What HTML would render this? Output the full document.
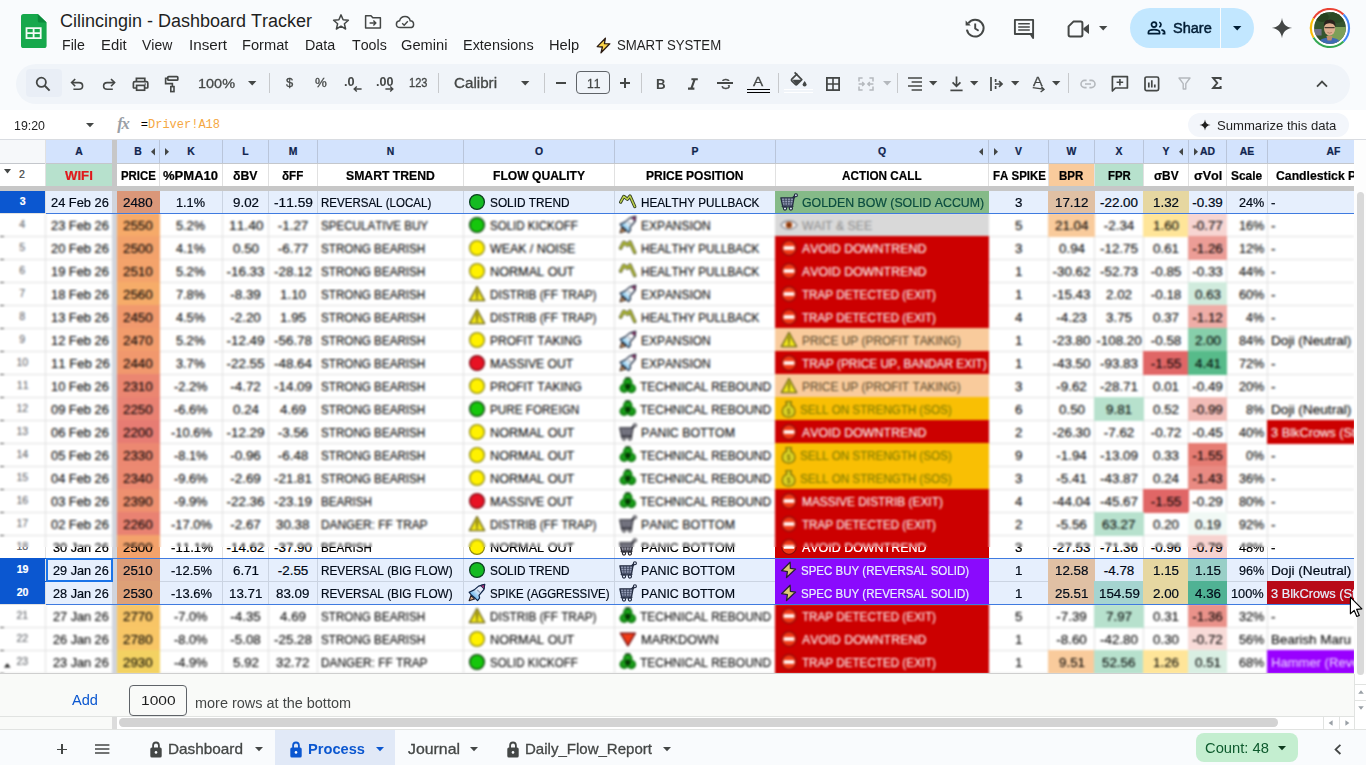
<!DOCTYPE html><html><head><meta charset="utf-8"><title>Cilincingin - Dashboard Tracker</title><style>
html,body{margin:0;padding:0}
body{width:1366px;height:765px;overflow:hidden;background:#f9fbfd;font-family:"Liberation Sans",sans-serif;position:relative}
.t{position:absolute;white-space:nowrap;transform-origin:0 0;line-height:1;font-style:normal;font-kerning:none}
.g .t{-webkit-text-stroke:.22px currentColor}
.g .nb .t{-webkit-text-stroke:.08px currentColor}
.r{position:absolute;display:block;box-sizing:border-box}
.ic{position:absolute;overflow:visible}
.clip{position:absolute;overflow:hidden}
.in{position:absolute;left:0;width:1366px;height:765px}
</style></head><body><svg width="0" height="0" style="position:absolute"><defs><linearGradient id="rk" x1="0" y1="1" x2="1" y2="0"><stop offset="0" stop-color="#2a86c8"/><stop offset=".36" stop-color="#9fd4f2"/><stop offset=".6" stop-color="#ffffff"/><stop offset="1" stop-color="#fdf3f6"/></linearGradient><radialGradient id="rc" cx=".5" cy=".45" r=".6"><stop offset="0" stop-color="#1fae1f"/><stop offset=".65" stop-color="#128712"/><stop offset="1" stop-color="#0a680a"/></radialGradient></defs></svg><svg class="ic" style="left:21.4px;top:14px;" width="26" height="34" viewBox="0 0 26 34"><path d="M2.6 0 H16.8 L25.6 8.6 V31.4 Q25.6 34 23 34 H2.6 Q0 34 0 31.4 V2.6 Q0 0 2.6 0 Z" fill="#17a84c"/><path d="M16.8 0 L25.6 8.6 H19 Q16.8 8.6 16.8 6.4 Z" fill="#0b8a3b"/><path d="M4.6 13.2 H20.6 V25 H4.6 Z M6.4 15 V18.2 H11.7 V15 Z M13.5 15 V18.2 H18.8 V15 Z M6.4 20 V23.2 H11.7 V20 Z M13.5 20 V23.2 H18.8 V20 Z" fill="#f4fbf6" fill-rule="evenodd"/></svg><i class="t" style="left:59.90px;top:12px;font-size:18px;color:#1f1f1f;">Cilincingin - Dashboard Tracker</i><svg class="ic" style="left:332px;top:13px;" width="18" height="18" viewBox="0 0 18 18"><path d="M9 1.9 L11.1 6.8 L16.4 7.3 L12.4 10.8 L13.6 16 L9 13.2 L4.4 16 L5.6 10.8 L1.6 7.3 L6.9 6.8 Z" fill="none" stroke="#444746" stroke-width="1.5" stroke-linejoin="round"/></svg><svg class="ic" style="left:364px;top:14px;" width="18" height="16" viewBox="0 0 18 16"><path d="M1.6 1.8 H7 L8.8 3.8 H16.4 V14 H1.6 Z" fill="none" stroke="#444746" stroke-width="1.5" stroke-linejoin="round"/><path d="M5.6 9 H11.6 M9.4 6.6 L11.8 9 L9.4 11.4" fill="none" stroke="#444746" stroke-width="1.4"/></svg><svg class="ic" style="left:395px;top:14px;" width="20" height="16" viewBox="0 0 20 16"><path d="M5.2 13.6 Q1.4 13.6 1.4 10.2 Q1.4 7.2 4.6 6.8 Q5.6 2.6 10 2.6 Q14.4 2.6 15.2 6.8 Q18.6 7 18.6 10.4 Q18.6 13.6 15 13.6 Z" fill="none" stroke="#444746" stroke-width="1.5" stroke-linejoin="round"/><path d="M7.2 9.2 L9.2 11.2 L12.8 7.2" fill="none" stroke="#444746" stroke-width="1.4"/></svg><i class="t" style="left:61.90px;top:38px;font-size:14px;color:#1f1f1f;transform:scaleX(1.0107);">File</i><i class="t" style="left:100.90px;top:38px;font-size:14px;color:#1f1f1f;transform:scaleX(1.0611);">Edit</i><i class="t" style="left:142.40px;top:38px;font-size:14px;color:#1f1f1f;transform:scaleX(0.9969);">View</i><i class="t" style="left:188.50px;top:38px;font-size:14px;color:#1f1f1f;transform:scaleX(1.0881);">Insert</i><i class="t" style="left:242.20px;top:38px;font-size:14px;color:#1f1f1f;transform:scaleX(1.0465);">Format</i><i class="t" style="left:304.80px;top:38px;font-size:14px;color:#1f1f1f;transform:scaleX(1.0246);">Data</i><i class="t" style="left:351.60px;top:38px;font-size:14px;color:#1f1f1f;transform:scaleX(1.0158);">Tools</i><i class="t" style="left:401.10px;top:38px;font-size:14px;color:#1f1f1f;transform:scaleX(1.0486);">Gemini</i><i class="t" style="left:462.80px;top:38px;font-size:14px;color:#1f1f1f;transform:scaleX(1.0309);">Extensions</i><i class="t" style="left:549.10px;top:38px;font-size:14px;color:#1f1f1f;transform:scaleX(1.0488);">Help</i><i class="t" style="left:616.70px;top:38px;font-size:14px;color:#1f1f1f;transform:scaleX(0.9431);">SMART SYSTEM</i><svg class="ic" style="left:595px;top:37px;" width="17" height="17" viewBox="0 0 17 17"><path d="M10.4 1.2 L2.2 9.6 L7.4 10 L6 15.8 L14.8 6.8 L9.4 6.6 Z" fill="#fbd44a" stroke="#2a1a12" stroke-width="1.3" stroke-linejoin="round"/></svg><svg class="ic" style="left:964px;top:17px;" width="22" height="22" viewBox="0 0 22 22"><path d="M4.4 6.2 A8.4 8.4 0 1 1 2.9 12.6" fill="none" stroke="#444746" stroke-width="2"/><path d="M1.6 3.4 V8.6 H6.8 Z" fill="#444746"/><path d="M11.2 6.6 V11.6 L14.6 13.8" fill="none" stroke="#444746" stroke-width="1.9"/></svg><svg class="ic" style="left:1013px;top:18px;" width="22" height="22" viewBox="0 0 22 22"><path d="M1.9 1.9 H20.1 V16 H17.6 L20.1 20 V16 H1.9 Z" fill="none" stroke="#444746" stroke-width="1.9" stroke-linejoin="round"/><path d="M17 15.6 L20.3 20.6 V15.6 Z" fill="#444746"/><path d="M5.2 5.8 H16.8 M5.2 8.9 H16.8 M5.2 12 H16.8" stroke="#444746" stroke-width="1.5"/></svg><svg class="ic" style="left:1067px;top:20px;" width="24" height="18" viewBox="0 0 24 18"><path d="M6.4 1.6 H13.8 Q15.4 1.6 15.4 3.2 V14.8 Q15.4 16.4 13.8 16.4 H3.2 Q1.6 16.4 1.6 14.8 V6.4 Z" fill="none" stroke="#444746" stroke-width="2" stroke-linejoin="round"/><path d="M16.4 8.2 L22 4 V14 L16.4 9.8 Z" fill="#444746"/></svg><svg class="ic" style="left:1098.8px;top:26.2px;" width="8.4" height="4.4" viewBox="0 0 8.4 4.4"><path d="M0 0 H8.4 L4.2 4.4 Z" fill="#444746"/></svg><b class="r" style="left:1130px;top:8px;width:124px;height:40px;border-radius:20px;background:#c2e7ff"></b><b class="r" style="left:1220px;top:8px;width:1px;height:40px;background:#f9fbfd"></b><svg class="ic" style="left:1147px;top:20px;" width="19" height="16" viewBox="0 0 19 16"><circle cx="7" cy="4.6" r="2.5" fill="none" stroke="#001d35" stroke-width="1.7"/><path d="M1.4 13.6 V12.4 Q1.4 9.6 7 9.6 Q12.6 9.6 12.6 12.4 V13.6 Z" fill="none" stroke="#001d35" stroke-width="1.7" stroke-linejoin="round"/><path d="M12.2 2.2 A2.5 2.5 0 0 1 12.2 7 M14.4 9.9 Q17.6 10.6 17.6 12.6 V13.6 H15.4" fill="none" stroke="#001d35" stroke-width="1.7"/></svg><i class="t" style="left:1172.80px;top:21px;font-size:14px;color:#001d35;transform:scaleX(1.0385);-webkit-text-stroke:.45px #001d35;">Share</i><svg class="ic" style="left:1232.6px;top:26.2px;" width="8.4" height="4.4" viewBox="0 0 8.4 4.4"><path d="M0 0 H8.4 L4.2 4.4 Z" fill="#001d35"/></svg><svg class="ic" style="left:1271px;top:17px;" width="22" height="22" viewBox="0 0 22 22"><path d="M11 0.8 C11.6 6.8 15.2 10.4 21.2 11 C15.2 11.6 11.6 15.2 11 21.2 C10.4 15.2 6.8 11.6 0.8 11 C6.8 10.4 10.4 6.8 11 0.8 Z" fill="#444746"/></svg><svg class="ic" style="left:1310px;top:7.8px;" width="40" height="40" viewBox="0 0 40 40"><defs><clipPath id="av"><circle cx="20" cy="20" r="15.9"/></clipPath></defs><path d="M20 20 L2.59 9.95 A20.1 20.1 0 0 1 34.21 5.79 Z" fill="#ea4335"/><path d="M20 20 L34.21 5.79 A20.1 20.1 0 0 1 34.21 34.21 Z" fill="#4285f4"/><path d="M20 20 L34.21 34.21 A20.1 20.1 0 0 1 2.59 30.05 Z" fill="#34a853"/><path d="M20 20 L2.59 30.05 A20.1 20.1 0 0 1 2.59 9.95 Z" fill="#fbbc04"/><circle cx="20" cy="20" r="18" fill="#fff"/><g clip-path="url(#av)"><rect x="0" y="0" width="40" height="40" fill="#35552f"/><path d="M20 19 H40 V40 H14 Z" fill="#7d9f58"/><path d="M4 21 H11.6 V27.6 H4 Z" fill="#7f789c" opacity=".8"/><ellipse cx="12" cy="9" rx="7" ry="5" fill="#27421f"/><ellipse cx="27" cy="9" rx="8" ry="6" fill="#2b4a25"/><path d="M6 40 Q8 29.6 19.4 29.6 Q31 29.6 33 40 Z" fill="#3f6bb3"/><path d="M16.4 28 H22.6 L21.4 32.4 H17.6 Z" fill="#c18e6d"/><ellipse cx="19.6" cy="20.6" rx="5.6" ry="7" fill="#dcae8f"/><path d="M13.6 18.4 Q13.6 11.4 19.8 11.6 Q25.8 11.6 25.6 18.2 Q23 15 19.6 15.2 Q16 15.2 13.6 18.4 Z" fill="#2a231d"/><path d="M14.6 19.6 H24.6" stroke="#4a3a30" stroke-width="1.1"/><path d="M17.4 24.4 Q19.6 26 21.8 24.4" stroke="#a8705a" stroke-width=".8" fill="none"/></g></svg><b class="r" style="left:16px;top:64px;width:1334px;height:40px;border-radius:20px;background:#f0f4f9"></b><b class="r" style="left:26px;top:69px;width:36px;height:28px;border-radius:4px;background:#e9eef6"></b><svg class="ic" style="left:35px;top:76px;" width="16" height="16" viewBox="0 0 16 16"><circle cx="6.3" cy="6.3" r="4.6" fill="none" stroke="#444746" stroke-width="1.8"/><path d="M9.8 9.8 L14.6 14.6" stroke="#444746" stroke-width="2"/></svg><svg class="ic" style="left:70px;top:76px;" width="15" height="16" viewBox="0 0 15 16"><path d="M2 6.6 H9 Q12.6 6.6 12.6 10 Q12.6 13.3 9 13.3 H3.4" fill="none" stroke="#444746" stroke-width="1.6"/><path d="M5.2 3 L1.6 6.6 L5.2 10.2" fill="none" stroke="#444746" stroke-width="1.6"/></svg><svg class="ic" style="left:102px;top:76px;" width="15" height="16" viewBox="0 0 15 16"><path d="M12.2 6.6 H5.2 Q1.6 6.6 1.6 10 Q1.6 13.3 5.2 13.3 H10.8" fill="none" stroke="#444746" stroke-width="1.6"/><path d="M9 3 L12.6 6.6 L9 10.2" fill="none" stroke="#444746" stroke-width="1.6"/></svg><svg class="ic" style="left:132.4px;top:75.6px;" width="18" height="17" viewBox="0 0 18 17"><path d="M4.4 5.6 V2.4 H12.8 V5.6" fill="none" stroke="#444746" stroke-width="1.7"/><path d="M4.2 12 H2.2 Q1.4 12 1.4 11.2 V7 Q1.4 5.6 2.8 5.6 H14.4 Q15.8 5.6 15.8 7 V11.2 Q15.8 12 15 12 H13" fill="none" stroke="#444746" stroke-width="1.7"/><rect x="4.6" y="9.4" width="8" height="4.8" fill="none" stroke="#444746" stroke-width="1.7"/><circle cx="13.2" cy="8" r=".8" fill="#444746"/></svg><svg class="ic" style="left:164.2px;top:75.4px;" width="16" height="18" viewBox="0 0 16 18"><rect x="3.8" y="1.6" width="10" height="3.6" rx=".8" fill="none" stroke="#444746" stroke-width="1.7"/><path d="M3.8 3.4 H1.6 V8.6 H8.4 V11.6" fill="none" stroke="#444746" stroke-width="1.6"/><rect x="6.8" y="11.6" width="3.2" height="5" fill="none" stroke="#444746" stroke-width="1.6"/></svg><i class="t" style="left:198.00px;top:77px;font-size:13.6px;color:#444746;transform:scaleX(1.0637);-webkit-text-stroke:.3px currentColor;">100%</i><svg class="ic" style="left:247.70000000000002px;top:81.39999999999999px;" width="8.4" height="4.4" viewBox="0 0 8.4 4.4"><path d="M0 0 H8.4 L4.2 4.4 Z" fill="#444746"/></svg><b class="r" style="left:269px;top:73px;width:1px;height:20px;background:#c7c9cc"></b><i class="t" style="left:285.60px;top:76px;font-size:13px;color:#444746;transform:scaleX(0.9958);-webkit-text-stroke:.3px currentColor;">$</i><i class="t" style="left:315.00px;top:76px;font-size:13px;color:#444746;transform:scaleX(1.0209);-webkit-text-stroke:.3px currentColor;">%</i><i class="t" style="left:344.40px;top:76px;font-size:12px;color:#444746;font-weight:700;transform:scaleX(1.0592);">.0</i><svg class="ic" style="left:353px;top:86px;" width="9" height="6" viewBox="0 0 9 6"><path d="M8.6 3 H1.6 M3.8 .6 L1.2 3 L3.8 5.4" fill="none" stroke="#444746" stroke-width="1.4"/></svg><i class="t" style="left:376.20px;top:76px;font-size:12px;color:#444746;font-weight:700;transform:scaleX(1.0430);">.00</i><svg class="ic" style="left:385px;top:86px;" width="9" height="6" viewBox="0 0 9 6"><path d="M.4 3 H7.4 M5.2 .6 L7.8 3 L5.2 5.4" fill="none" stroke="#444746" stroke-width="1.4"/></svg><i class="t" style="left:409.00px;top:77px;font-size:12px;color:#444746;transform:scaleX(0.9190);-webkit-text-stroke:.3px currentColor;">123</i><b class="r" style="left:438px;top:73px;width:1px;height:20px;background:#c7c9cc"></b><i class="t" style="left:454.00px;top:76px;font-size:14px;color:#444746;transform:scaleX(1.0837);-webkit-text-stroke:.3px currentColor;">Calibri</i><svg class="ic" style="left:520.5999999999999px;top:81.39999999999999px;" width="8.4" height="4.4" viewBox="0 0 8.4 4.4"><path d="M0 0 H8.4 L4.2 4.4 Z" fill="#444746"/></svg><b class="r" style="left:544px;top:73px;width:1px;height:20px;background:#c7c9cc"></b><b class="r" style="left:556px;top:82px;width:10px;height:1.6px;background:#444746"></b><b class="r" style="left:576px;top:71px;width:34px;height:23.4px;border:1px solid #5f6368;border-radius:4px"></b><i class="t" style="left:587.20px;top:77px;font-size:13.6px;color:#444746;transform:scaleX(0.8924);-webkit-text-stroke:.3px currentColor;">11</i><b class="r" style="left:620px;top:82px;width:10.4px;height:1.6px;background:#444746"></b><b class="r" style="left:624.4px;top:77.6px;width:1.6px;height:10.4px;background:#444746"></b><b class="r" style="left:641px;top:73px;width:1px;height:20px;background:#c7c9cc"></b><i class="t" style="left:656.20px;top:76px;font-size:15px;color:#444746;font-weight:700;transform:scaleX(0.8862);">B</i><svg class="ic" style="left:687px;top:77px;" width="12" height="13" viewBox="0 0 12 13"><path d="M4.4 2.2 H10.8 M1 11.6 H7.4 M7.7 2.2 L4.3 11.6" fill="none" stroke="#444746" stroke-width="2.1"/></svg><i class="t" style="left:720.90px;top:77px;font-size:14.6px;color:#444746;transform:scaleX(0.9652);-webkit-text-stroke:.3px currentColor;">S</i><b class="r" style="left:716px;top:81.2px;width:18px;height:3.8px;background:#f0f4f9"></b><b class="r" style="left:717px;top:82.4px;width:16px;height:1.5px;background:#444746"></b><i class="t" style="left:753.10px;top:75px;font-size:13.4px;color:#444746;transform:scaleX(1.1412);-webkit-text-stroke:.3px currentColor;">A</i><b class="r" style="left:747px;top:88.8px;width:23.2px;height:1.6px;background:#000"></b><b class="r" style="left:747px;top:91.7px;width:23.2px;height:1.6px;background:#000"></b><b class="r" style="left:778px;top:73px;width:1px;height:20px;background:#c7c9cc"></b><svg class="ic" style="left:789px;top:71px;" width="20" height="18" viewBox="0 0 20 18"><path d="M5.6 1.4 L12.8 8.6 L8 13.4 Q7.2 14.2 6.4 13.4 L2.8 9.8 Q2 9 2.8 8.2 L8.4 2.6" fill="none" stroke="#444746" stroke-width="1.7" stroke-linejoin="round"/><path d="M3.4 8.8 H12.4 L7.2 13.8 Z" fill="#444746"/><path d="M15.6 10 Q17.6 12.6 17.6 13.6 A2 2 0 0 1 13.6 13.6 Q13.6 12.6 15.6 10 Z" fill="#444746"/></svg><b class="r" style="left:784.4px;top:88.8px;width:28.2px;height:1.6px;background:#fff"></b><b class="r" style="left:784.4px;top:91.7px;width:28.2px;height:1.6px;background:#fff"></b><svg class="ic" style="left:826px;top:77px;" width="14" height="14" viewBox="0 0 14 14"><rect x=".9" y=".9" width="12.2" height="12.2" fill="none" stroke="#444746" stroke-width="1.8"/><path d="M7 1 V13 M1 7 H13" stroke="#444746" stroke-width="1.6"/></svg><svg class="ic" style="left:858px;top:77px;" width="16" height="14" viewBox="0 0 16 14"><path d="M4.6 1 H1 V4.4 M11.4 1 H15 V4.4 M4.6 13 H1 V9.6 M11.4 13 H15 V9.6" fill="none" stroke="#b4b8bd" stroke-width="1.5"/><path d="M.6 7 H6 M4.2 5 L6.2 7 L4.2 9 M15.4 7 H10 M11.8 5 L9.8 7 L11.8 9" fill="none" stroke="#b4b8bd" stroke-width="1.4"/></svg><svg class="ic" style="left:882.6999999999999px;top:81.39999999999999px;" width="8.4" height="4.4" viewBox="0 0 8.4 4.4"><path d="M0 0 H8.4 L4.2 4.4 Z" fill="#b4b8bd"/></svg><b class="r" style="left:897px;top:73px;width:1px;height:20px;background:#c7c9cc"></b><svg class="ic" style="left:908px;top:77px;" width="14" height="14" viewBox="0 0 14 14"><path d="M0 1 H14 M3.6 5 H14 M0 9 H14 M3.6 13 H14" stroke="#444746" stroke-width="1.7"/></svg><svg class="ic" style="left:928.8px;top:81.39999999999999px;" width="8.4" height="4.4" viewBox="0 0 8.4 4.4"><path d="M0 0 H8.4 L4.2 4.4 Z" fill="#444746"/></svg><svg class="ic" style="left:950px;top:76px;" width="13" height="16" viewBox="0 0 13 16"><path d="M6.5 .6 V10 M2.6 6.4 L6.5 10.4 L10.4 6.4" fill="none" stroke="#444746" stroke-width="1.7"/><path d="M.4 14.4 H12.6" stroke="#444746" stroke-width="1.7"/></svg><svg class="ic" style="left:969.8px;top:81.39999999999999px;" width="8.4" height="4.4" viewBox="0 0 8.4 4.4"><path d="M0 0 H8.4 L4.2 4.4 Z" fill="#444746"/></svg><svg class="ic" style="left:990px;top:77px;" width="14" height="14" viewBox="0 0 14 14"><path d="M1 0 V14 M5.6 2 V5 M5.6 9 V12" stroke="#444746" stroke-width="1.7"/><path d="M5 7 H11.4 M9 4.2 L12 7 L9 9.8" fill="none" stroke="#444746" stroke-width="1.7"/></svg><svg class="ic" style="left:1010.8px;top:81.39999999999999px;" width="8.4" height="4.4" viewBox="0 0 8.4 4.4"><path d="M0 0 H8.4 L4.2 4.4 Z" fill="#444746"/></svg><i class="t" style="left:1033.00px;top:76px;font-size:12.6px;color:#444746;transform:scaleX(1.1422);-webkit-text-stroke:.3px currentColor;">A</i><svg class="ic" style="left:1032px;top:86px;" width="14" height="7" viewBox="0 0 14 7"><path d="M.6 2.4 H11.4 M9 .2 L12 2.6 L9 5.6" fill="none" stroke="#444746" stroke-width="1.4" transform="rotate(8 6 3)"/></svg><svg class="ic" style="left:1051.8px;top:81.39999999999999px;" width="8.4" height="4.4" viewBox="0 0 8.4 4.4"><path d="M0 0 H8.4 L4.2 4.4 Z" fill="#444746"/></svg><b class="r" style="left:1068px;top:73px;width:1px;height:20px;background:#c7c9cc"></b><svg class="ic" style="left:1080px;top:79px;" width="16" height="10" viewBox="0 0 16 10"><path d="M6.6 1.4 H4.6 A3.6 3.6 0 0 0 4.6 8.6 H6.6 M9.4 1.4 H11.4 A3.6 3.6 0 0 1 11.4 8.6 H9.4 M5 5 H11" fill="none" stroke="#b4b8bd" stroke-width="1.6"/></svg><svg class="ic" style="left:1111px;top:75px;" width="18" height="18" viewBox="0 0 18 18"><path d="M1.4 1.6 H16.4 V13 H4.4 L1.4 16 Z" fill="none" stroke="#444746" stroke-width="1.7" stroke-linejoin="round"/><path d="M8.9 4 V10.6 M5.6 7.3 H12.2" stroke="#444746" stroke-width="1.6"/></svg><svg class="ic" style="left:1144px;top:76px;" width="16" height="16" viewBox="0 0 16 16"><rect x="1" y="1" width="13.6" height="13.6" rx="1.6" fill="none" stroke="#444746" stroke-width="1.7"/><path d="M4.8 6.6 V11.6 M7.8 4.2 V11.6 M10.8 8.6 V11.6" stroke="#444746" stroke-width="1.7"/></svg><svg class="ic" style="left:1178px;top:77px;" width="13" height="14" viewBox="0 0 13 14"><path d="M1 1 H12 L7.8 6.6 V12 H5.2 V6.6 Z" fill="none" stroke="#b4b8bd" stroke-width="1.4" stroke-linejoin="round"/></svg><svg class="ic" style="left:1212px;top:77.4px;" width="10" height="12" viewBox="0 0 10 12"><path d="M8.6 2.9 V1 H1.2 L5.2 6 L1.2 11 H8.6 V9.1" fill="none" stroke="#444746" stroke-width="2" stroke-linejoin="miter"/></svg><svg class="ic" style="left:1316px;top:80px;" width="12" height="8" viewBox="0 0 12 8"><path d="M1 6.6 L6 1.6 L11 6.6" fill="none" stroke="#444746" stroke-width="1.8"/></svg><b class="r" style="left:0;top:110px;width:1366px;height:30px;background:#fff"></b><b class="r" style="left:0;top:139px;width:1366px;height:1px;background:#d9dce1"></b><i class="t" style="left:14.00px;top:119px;font-size:13px;color:#1f1f1f;transform:scaleX(0.9529);">19:20</i><svg class="ic" style="left:85.6px;top:122.9px;" width="8" height="4.2" viewBox="0 0 8 4.2"><path d="M0 0 H8 L4.0 4.2 Z" fill="#444746"/></svg><i class="t" style="left:117.2px;top:116.4px;font-family:'Liberation Serif',serif;font-style:italic;font-weight:700;font-size:16.6px;color:#9aa0a6;letter-spacing:-1.2px">fx</i><i class="t" style="left:140.8px;top:119.4px;font-family:'Liberation Mono',monospace;font-size:12px;color:#000">=<span style="color:#f5a742">Driver!A18</span></i><b class="r" style="left:1188px;top:113px;width:161px;height:24px;border-radius:12px;background:#f3f6fb"></b><svg class="ic" style="left:1199px;top:119px;" width="12" height="12" viewBox="0 0 12 12"><path d="M6 .4 C6.4 3.8 8.2 5.6 11.6 6 C8.2 6.4 6.4 8.2 6 11.6 C5.6 8.2 3.8 6.4 .4 6 C3.8 5.6 5.6 3.8 6 .4 Z" fill="#1f1f1f"/></svg><i class="t" style="left:1217.40px;top:119px;font-size:13px;color:#1f1f1f;transform:scaleX(1.0076);">Summarize this data</i><div class="clip g" style="left:0;top:0;width:1354px;height:765px"><b class="r" style="left:0px;top:140px;width:1354px;height:534px;background:#fff"></b><b class="r" style="left:0px;top:140px;width:45px;height:23px;background:#f6f8fa"></b><b class="r" style="left:46px;top:140px;width:1308px;height:23px;background:#d3e3fd"></b><b class="r" style="left:0px;top:163px;width:1354px;height:1px;background:#c4c7cc"></b><i class="t" style="left:75.24px;top:147px;font-size:10.4px;color:#10254f;font-weight:700;">A</i><i class="t" style="left:134.24px;top:147px;font-size:10.4px;color:#10254f;font-weight:700;">B</i><b class="r" style="left:159px;top:140px;width:1px;height:23px;background:#b9c5da"></b><i class="t" style="left:187.24px;top:147px;font-size:10.4px;color:#10254f;font-weight:700;">K</i><b class="r" style="left:222px;top:140px;width:1px;height:23px;background:#b9c5da"></b><i class="t" style="left:242.32px;top:147px;font-size:10.4px;color:#10254f;font-weight:700;">L</i><b class="r" style="left:268px;top:140px;width:1px;height:23px;background:#b9c5da"></b><i class="t" style="left:288.67px;top:147px;font-size:10.4px;color:#10254f;font-weight:700;">M</i><b class="r" style="left:317px;top:140px;width:1px;height:23px;background:#b9c5da"></b><i class="t" style="left:386.74px;top:147px;font-size:10.4px;color:#10254f;font-weight:700;">N</i><b class="r" style="left:463px;top:140px;width:1px;height:23px;background:#b9c5da"></b><i class="t" style="left:534.96px;top:147px;font-size:10.4px;color:#10254f;font-weight:700;">O</i><b class="r" style="left:614px;top:140px;width:1px;height:23px;background:#b9c5da"></b><i class="t" style="left:691.53px;top:147px;font-size:10.4px;color:#10254f;font-weight:700;">P</i><b class="r" style="left:775px;top:140px;width:1px;height:23px;background:#b9c5da"></b><i class="t" style="left:877.96px;top:147px;font-size:10.4px;color:#10254f;font-weight:700;">Q</i><b class="r" style="left:988px;top:140px;width:1px;height:23px;background:#b9c5da"></b><i class="t" style="left:1015.03px;top:147px;font-size:10.4px;color:#10254f;font-weight:700;">V</i><b class="r" style="left:1048px;top:140px;width:1px;height:23px;background:#b9c5da"></b><i class="t" style="left:1066.59px;top:147px;font-size:10.4px;color:#10254f;font-weight:700;">W</i><b class="r" style="left:1094px;top:140px;width:1px;height:23px;background:#b9c5da"></b><i class="t" style="left:1115.53px;top:147px;font-size:10.4px;color:#10254f;font-weight:700;">X</i><b class="r" style="left:1143px;top:140px;width:1px;height:23px;background:#b9c5da"></b><i class="t" style="left:1162.53px;top:147px;font-size:10.4px;color:#10254f;font-weight:700;">Y</i><b class="r" style="left:1188px;top:140px;width:1px;height:23px;background:#b9c5da"></b><i class="t" style="left:1199.99px;top:147px;font-size:10.4px;color:#10254f;font-weight:700;">AD</i><b class="r" style="left:1226px;top:140px;width:1px;height:23px;background:#b9c5da"></b><i class="t" style="left:1239.78px;top:147px;font-size:10.4px;color:#10254f;font-weight:700;">AE</i><b class="r" style="left:1267px;top:140px;width:1px;height:23px;background:#b9c5da"></b><i class="t" style="left:1326.57px;top:147px;font-size:10.4px;color:#10254f;font-weight:700;">AF</i><svg class="ic" style="left:150.5px;top:148.3px" width="4" height="8" viewBox="0 0 4 8"><path d="M4 0 V7.6 L0 3.8 Z" fill="#444746"/></svg><svg class="ic" style="left:165px;top:148.3px" width="4" height="8" viewBox="0 0 4 8"><path d="M0 0 V7.6 L4 3.8 Z" fill="#444746"/></svg><svg class="ic" style="left:979.2px;top:148.3px" width="4" height="8" viewBox="0 0 4 8"><path d="M4 0 V7.6 L0 3.8 Z" fill="#444746"/></svg><svg class="ic" style="left:994px;top:148.3px" width="4" height="8" viewBox="0 0 4 8"><path d="M0 0 V7.6 L4 3.8 Z" fill="#444746"/></svg><svg class="ic" style="left:1179.4px;top:148.3px" width="4" height="8" viewBox="0 0 4 8"><path d="M4 0 V7.6 L0 3.8 Z" fill="#444746"/></svg><svg class="ic" style="left:1194px;top:148.3px" width="4" height="8" viewBox="0 0 4 8"><path d="M0 0 V7.6 L4 3.8 Z" fill="#444746"/></svg><b class="r" style="left:46px;top:164px;width:66px;height:22px;background:#b7e1cd"></b><b class="r" style="left:1049px;top:164px;width:45px;height:22px;background:#f9cb9c"></b><b class="r" style="left:1095px;top:164px;width:48px;height:22px;background:#b7e1cd"></b><b class="r" style="left:159px;top:164px;width:1px;height:22px;background:#e1e1e1"></b><b class="r" style="left:222px;top:164px;width:1px;height:22px;background:#e1e1e1"></b><b class="r" style="left:268px;top:164px;width:1px;height:22px;background:#e1e1e1"></b><b class="r" style="left:317px;top:164px;width:1px;height:22px;background:#e1e1e1"></b><b class="r" style="left:463px;top:164px;width:1px;height:22px;background:#e1e1e1"></b><b class="r" style="left:614px;top:164px;width:1px;height:22px;background:#e1e1e1"></b><b class="r" style="left:775px;top:164px;width:1px;height:22px;background:#e1e1e1"></b><b class="r" style="left:988px;top:164px;width:1px;height:22px;background:#e1e1e1"></b><b class="r" style="left:1048px;top:164px;width:1px;height:22px;background:#e1e1e1"></b><b class="r" style="left:1094px;top:164px;width:1px;height:22px;background:#e1e1e1"></b><b class="r" style="left:1143px;top:164px;width:1px;height:22px;background:#e1e1e1"></b><b class="r" style="left:1188px;top:164px;width:1px;height:22px;background:#e1e1e1"></b><b class="r" style="left:1226px;top:164px;width:1px;height:22px;background:#e1e1e1"></b><b class="r" style="left:1267px;top:164px;width:1px;height:22px;background:#e1e1e1"></b><i class="t" style="left:65.08px;top:169px;font-size:13.4px;color:#e0191c;font-weight:700;transform:scaleX(0.9847);">WIFI</i><i class="t" style="left:120.55px;top:169px;font-size:13.4px;color:#000;font-weight:700;transform:scaleX(0.8520);">PRICE</i><i class="t" style="left:163.46px;top:169px;font-size:13.4px;color:#000;font-weight:700;transform:scaleX(0.9731);">%PMA10</i><i class="t" style="left:233.27px;top:169px;font-size:13.4px;color:#000;font-weight:700;transform:scaleX(0.9145);">δBV</i><i class="t" style="left:282.36px;top:169px;font-size:13.4px;color:#000;font-weight:700;transform:scaleX(0.8685);">δFF</i><i class="t" style="left:346.04px;top:169px;font-size:13.4px;color:#000;font-weight:700;transform:scaleX(0.9117);">SMART TREND</i><i class="t" style="left:492.93px;top:169px;font-size:13.4px;color:#000;font-weight:700;transform:scaleX(0.9037);">FLOW QUALITY</i><i class="t" style="left:646.24px;top:169px;font-size:13.4px;color:#000;font-weight:700;transform:scaleX(0.8972);">PRICE POSITION</i><i class="t" style="left:842.16px;top:169px;font-size:13.4px;color:#000;font-weight:700;transform:scaleX(0.8774);">ACTION CALL</i><i class="t" style="left:992.54px;top:169px;font-size:13.4px;color:#000;font-weight:700;transform:scaleX(0.8574);">FA SPIKE</i><i class="t" style="left:1059.36px;top:169px;font-size:13.4px;color:#000;font-weight:700;transform:scaleX(0.8583);">BPR</i><i class="t" style="left:1107.60px;top:169px;font-size:13.4px;color:#000;font-weight:700;transform:scaleX(0.8505);">FPR</i><i class="t" style="left:1153.69px;top:169px;font-size:13.4px;color:#000;font-weight:700;transform:scaleX(0.8865);">σBV</i><i class="t" style="left:1193.77px;top:169px;font-size:13.4px;color:#000;font-weight:700;transform:scaleX(0.9465);">σVol</i><i class="t" style="left:1231.39px;top:169px;font-size:13.4px;color:#000;font-weight:700;transform:scaleX(0.8912);">Scale</i><i class="t" style="left:1275.60px;top:169px;font-size:13.4px;color:#000;font-weight:700;transform:scaleX(0.9138);">Candlestick P</i><i class="t" style="left:19.05px;top:169px;font-size:10.6px;color:#444746;">2</i><svg class="ic" style="left:4px;top:168.6px" width="7" height="5" viewBox="0 0 7 5"><path d="M0 0 H7 L3.5 4.4 Z" fill="#444746"/></svg><b class="r" style="left:45px;top:140px;width:1px;height:46px;background:#e1e1e1"></b><div class="in" style="top:0"><b class="r" style="left:0px;top:190px;width:46px;height:24px;background:#0b57d0"></b><i class="t" style="left:19.65px;top:196px;font-size:10.6px;color:#fff;font-weight:700;">3</i><b class="r" style="left:0px;top:213px;width:1354px;height:1px;background:#e1e1e1"></b><b class="r" style="left:159px;top:191px;width:1px;height:22px;background:#e1e1e1"></b><b class="r" style="left:222px;top:191px;width:1px;height:22px;background:#e1e1e1"></b><b class="r" style="left:268px;top:191px;width:1px;height:22px;background:#e1e1e1"></b><b class="r" style="left:317px;top:191px;width:1px;height:22px;background:#e1e1e1"></b><b class="r" style="left:463px;top:191px;width:1px;height:22px;background:#e1e1e1"></b><b class="r" style="left:614px;top:191px;width:1px;height:22px;background:#e1e1e1"></b><b class="r" style="left:775px;top:191px;width:1px;height:22px;background:#e1e1e1"></b><b class="r" style="left:988px;top:191px;width:1px;height:22px;background:#e1e1e1"></b><b class="r" style="left:1048px;top:191px;width:1px;height:22px;background:#e1e1e1"></b><b class="r" style="left:1094px;top:191px;width:1px;height:22px;background:#e1e1e1"></b><b class="r" style="left:1143px;top:191px;width:1px;height:22px;background:#e1e1e1"></b><b class="r" style="left:1188px;top:191px;width:1px;height:22px;background:#e1e1e1"></b><b class="r" style="left:1226px;top:191px;width:1px;height:22px;background:#e1e1e1"></b><b class="r" style="left:1267px;top:191px;width:1px;height:22px;background:#e1e1e1"></b><b class="r" style="left:45px;top:191px;width:1px;height:23px;background:#e1e1e1"></b><b class="r" style="left:117px;top:191px;width:43px;height:23px;background:#f29e6c"></b><b class="r" style="left:775px;top:191px;width:214px;height:23px;background:#93c47d"></b><b class="r" style="left:1048px;top:191px;width:47px;height:23px;background:#f9cb9c"></b><b class="r" style="left:1143px;top:191px;width:46px;height:23px;background:#ffe599"></b><i class="t" style="left:51.45px;top:196px;font-size:13.4px;color:#000;transform:scaleX(0.9594);">24 Feb 26</i><i class="t" style="left:123.13px;top:196px;font-size:13.4px;color:#000;transform:scaleX(0.9975);">2480</i><i class="t" style="left:176.47px;top:196px;font-size:13.4px;color:#000;transform:scaleX(0.9513);">1.1%</i><i class="t" style="left:232.50px;top:196px;font-size:13.4px;color:#000;transform:scaleX(0.9971);">9.02</i><i class="t" style="left:274.04px;top:196px;font-size:13.4px;color:#000;transform:scaleX(1.0251);">-11.59</i><i class="t" style="left:321.00px;top:196px;font-size:13.4px;color:#000;transform:scaleX(0.8613);">REVERSAL (LOCAL)</i><svg class="ic" style="left:468.00px;top:193.00px" width="18" height="18" viewBox="0 0 18 18"><circle cx="9" cy="9" r="7.4" fill="#16c60c" stroke="#0c3f0a" stroke-width="1.3"/></svg><i class="t" style="left:490.00px;top:196px;font-size:13.4px;color:#000;transform:scaleX(0.8839);">SOLID TREND</i><svg class="ic" style="left:619.00px;top:193.00px" width="18" height="18" viewBox="0 0 18 18"><path d="M1.6 9.2 L4.8 3.3 L8.4 6.3 L11 3 L15.8 13.6" fill="none" stroke="#33360a" stroke-width="3.2" stroke-linecap="round" stroke-linejoin="round"/><path d="M1.6 9.2 L4.8 3.3 L8.4 6.3 L11 3 L15.8 13.6" fill="none" stroke="#d2de3c" stroke-width="1.5" stroke-linecap="round" stroke-linejoin="round"/></svg><i class="t" style="left:641.00px;top:196px;font-size:13.4px;color:#000;transform:scaleX(0.8744);">HEALTHY PULLBACK</i><svg class="ic" style="left:780.00px;top:193.00px" width="18" height="18" viewBox="0 0 18 18"><path d="M12.8 5.2 L15.4 2.6" stroke="#23232b" stroke-width="2.2" stroke-linecap="round"/><circle cx="15.9" cy="2.2" r="1.5" fill="#f0f0f4" stroke="#23232b" stroke-width="1.1"/><path d="M.9 4.8 H14 L12.6 12.3 H2.5 Z" fill="#a9a9b6" stroke="#23232b" stroke-width="1.3" stroke-linejoin="round"/><path d="M1.6 7.3 H13.4 M2.2 9.8 H12.9 M4.5 5 L5 12 M7.5 5 V12 M10.6 5 L10.1 12" stroke="#3c3c48" stroke-width=".75"/><path d="M2.5 12.3 L2.1 14 H13 L12.6 12.3" fill="#62626e" stroke="#23232b" stroke-width="1" stroke-linejoin="round"/><circle cx="5" cy="15.5" r="1.6" fill="#f4f4f7" stroke="#23232b" stroke-width="1.1"/><circle cx="10.9" cy="15.5" r="1.6" fill="#f4f4f7" stroke="#23232b" stroke-width="1.1"/></svg><i class="t" style="left:802.00px;top:196px;font-size:13.4px;color:#0b4a2c;transform:scaleX(0.9200);">GOLDEN BOW (SOLID ACCUM)</i><i class="t" style="left:1014.78px;top:196px;font-size:13.4px;color:#000;transform:scaleX(0.9975);">3</i><i class="t" style="left:1054.78px;top:196px;font-size:13.4px;color:#000;transform:scaleX(0.9972);">17.12</i><i class="t" style="left:1100.04px;top:196px;font-size:13.4px;color:#000;">-22.00</i><i class="t" style="left:1153.00px;top:196px;font-size:13.4px;color:#000;transform:scaleX(0.9971);">1.32</i><i class="t" style="left:1192.25px;top:196px;font-size:13.4px;color:#000;">-0.39</i><i class="t" style="left:1238.65px;top:196px;font-size:13.4px;color:#000;transform:scaleX(0.9453);">24%</i><i class="t" style="left:1271.00px;top:196px;font-size:13.4px;color:#000;transform:scaleX(1.0062);">-</i><i class="t" style="left:16.40px;top:541px;font-size:10.6px;color:#5f6368;">18</i><b class="r" style="left:0px;top:558px;width:1354px;height:1px;background:#e1e1e1"></b><b class="r" style="left:159px;top:536px;width:1px;height:22px;background:#e1e1e1"></b><b class="r" style="left:222px;top:536px;width:1px;height:22px;background:#e1e1e1"></b><b class="r" style="left:268px;top:536px;width:1px;height:22px;background:#e1e1e1"></b><b class="r" style="left:317px;top:536px;width:1px;height:22px;background:#e1e1e1"></b><b class="r" style="left:463px;top:536px;width:1px;height:22px;background:#e1e1e1"></b><b class="r" style="left:614px;top:536px;width:1px;height:22px;background:#e1e1e1"></b><b class="r" style="left:775px;top:536px;width:1px;height:22px;background:#e1e1e1"></b><b class="r" style="left:988px;top:536px;width:1px;height:22px;background:#e1e1e1"></b><b class="r" style="left:1048px;top:536px;width:1px;height:22px;background:#e1e1e1"></b><b class="r" style="left:1094px;top:536px;width:1px;height:22px;background:#e1e1e1"></b><b class="r" style="left:1143px;top:536px;width:1px;height:22px;background:#e1e1e1"></b><b class="r" style="left:1188px;top:536px;width:1px;height:22px;background:#e1e1e1"></b><b class="r" style="left:1226px;top:536px;width:1px;height:22px;background:#e1e1e1"></b><b class="r" style="left:1267px;top:536px;width:1px;height:22px;background:#e1e1e1"></b><b class="r" style="left:45px;top:536px;width:1px;height:23px;background:#e1e1e1"></b><b class="r" style="left:117px;top:535px;width:43px;height:24px;background:#f3a26b"></b><b class="r" style="left:775px;top:535px;width:214px;height:24px;background:#cc0000"></b><b class="r" style="left:1188px;top:535px;width:39px;height:24px;background:#f7d3d0"></b><i class="t" style="left:52.51px;top:541px;font-size:13.4px;color:#000;transform:scaleX(0.9476);">30 Jan 26</i><i class="t" style="left:123.13px;top:541px;font-size:13.4px;color:#000;transform:scaleX(0.9975);">2500</i><i class="t" style="left:170.51px;top:541px;font-size:13.4px;color:#000;transform:scaleX(0.9883);">-11.1%</i><i class="t" style="left:226.54px;top:541px;font-size:13.4px;color:#000;">-14.62</i><i class="t" style="left:274.04px;top:541px;font-size:13.4px;color:#000;">-37.90</i><i class="t" style="left:321.00px;top:541px;font-size:13.4px;color:#000;transform:scaleX(0.8670);">BEARISH</i><svg class="ic" style="left:468.00px;top:538.00px" width="18" height="18" viewBox="0 0 18 18"><circle cx="9" cy="9" r="7.4" fill="#fff100" stroke="#8f8a12" stroke-width="1.3"/></svg><i class="t" style="left:490.00px;top:541px;font-size:13.4px;color:#000;transform:scaleX(0.9446);">NORMAL OUT</i><svg class="ic" style="left:619.00px;top:538.00px" width="18" height="18" viewBox="0 0 18 18"><path d="M12.8 5.2 L15.4 2.6" stroke="#23232b" stroke-width="2.2" stroke-linecap="round"/><circle cx="15.9" cy="2.2" r="1.5" fill="#f0f0f4" stroke="#23232b" stroke-width="1.1"/><path d="M.9 4.8 H14 L12.6 12.3 H2.5 Z" fill="#a9a9b6" stroke="#23232b" stroke-width="1.3" stroke-linejoin="round"/><path d="M1.6 7.3 H13.4 M2.2 9.8 H12.9 M4.5 5 L5 12 M7.5 5 V12 M10.6 5 L10.1 12" stroke="#3c3c48" stroke-width=".75"/><path d="M2.5 12.3 L2.1 14 H13 L12.6 12.3" fill="#62626e" stroke="#23232b" stroke-width="1" stroke-linejoin="round"/><circle cx="5" cy="15.5" r="1.6" fill="#f4f4f7" stroke="#23232b" stroke-width="1.1"/><circle cx="10.9" cy="15.5" r="1.6" fill="#f4f4f7" stroke="#23232b" stroke-width="1.1"/></svg><i class="t" style="left:641.00px;top:541px;font-size:13.4px;color:#000;transform:scaleX(0.9221);">PANIC BOTTOM</i><svg class="ic" style="left:780.00px;top:538.00px" width="18" height="18" viewBox="0 0 18 18"><circle cx="9" cy="9" r="7.3" fill="#f03a17" stroke="#8b0a0a" stroke-width="1.3"/><rect x="3.6" y="7.3" width="10.8" height="3.4" rx="0.6" fill="#fff"/></svg><i class="t" style="left:802.00px;top:541px;font-size:13.4px;color:#ffffff;transform:scaleX(0.9291);">AVOID DOWNTREND</i><i class="t" style="left:1014.78px;top:541px;font-size:13.4px;color:#000;transform:scaleX(0.9975);">3</i><i class="t" style="left:1052.54px;top:541px;font-size:13.4px;color:#000;">-27.53</i><i class="t" style="left:1100.04px;top:541px;font-size:13.4px;color:#000;">-71.36</i><i class="t" style="left:1150.75px;top:541px;font-size:13.4px;color:#000;">-0.96</i><i class="t" style="left:1192.25px;top:541px;font-size:13.4px;color:#000;">-0.79</i><i class="t" style="left:1238.65px;top:541px;font-size:13.4px;color:#000;transform:scaleX(0.9453);">48%</i><i class="t" style="left:1271.00px;top:541px;font-size:13.4px;color:#000;transform:scaleX(1.0062);">-</i><b class="r" style="left:0px;top:558px;width:46px;height:24px;background:#0b57d0"></b><i class="t" style="left:16.70px;top:564px;font-size:10.6px;color:#fff;font-weight:700;">19</i><b class="r" style="left:0px;top:581px;width:1354px;height:1px;background:#e1e1e1"></b><b class="r" style="left:159px;top:559px;width:1px;height:22px;background:#e1e1e1"></b><b class="r" style="left:222px;top:559px;width:1px;height:22px;background:#e1e1e1"></b><b class="r" style="left:268px;top:559px;width:1px;height:22px;background:#e1e1e1"></b><b class="r" style="left:317px;top:559px;width:1px;height:22px;background:#e1e1e1"></b><b class="r" style="left:463px;top:559px;width:1px;height:22px;background:#e1e1e1"></b><b class="r" style="left:614px;top:559px;width:1px;height:22px;background:#e1e1e1"></b><b class="r" style="left:775px;top:559px;width:1px;height:22px;background:#e1e1e1"></b><b class="r" style="left:988px;top:559px;width:1px;height:22px;background:#e1e1e1"></b><b class="r" style="left:1048px;top:559px;width:1px;height:22px;background:#e1e1e1"></b><b class="r" style="left:1094px;top:559px;width:1px;height:22px;background:#e1e1e1"></b><b class="r" style="left:1143px;top:559px;width:1px;height:22px;background:#e1e1e1"></b><b class="r" style="left:1188px;top:559px;width:1px;height:22px;background:#e1e1e1"></b><b class="r" style="left:1226px;top:559px;width:1px;height:22px;background:#e1e1e1"></b><b class="r" style="left:1267px;top:559px;width:1px;height:22px;background:#e1e1e1"></b><b class="r" style="left:45px;top:559px;width:1px;height:23px;background:#e1e1e1"></b><b class="r" style="left:117px;top:558px;width:43px;height:24px;background:#f4a36b"></b><b class="r" style="left:775px;top:558px;width:214px;height:24px;background:#9900ff"></b><b class="r" style="left:1048px;top:558px;width:47px;height:24px;background:#f9cb9c"></b><b class="r" style="left:1143px;top:558px;width:46px;height:24px;background:#ffe599"></b><b class="r" style="left:1188px;top:558px;width:39px;height:24px;background:#aadcc3"></b><i class="t" style="left:52.51px;top:564px;font-size:13.4px;color:#000;transform:scaleX(0.9476);">29 Jan 26</i><i class="t" style="left:123.13px;top:564px;font-size:13.4px;color:#000;transform:scaleX(0.9975);">2510</i><i class="t" style="left:170.51px;top:564px;font-size:13.4px;color:#000;transform:scaleX(0.9652);">-12.5%</i><i class="t" style="left:232.50px;top:564px;font-size:13.4px;color:#000;transform:scaleX(0.9971);">6.71</i><i class="t" style="left:277.75px;top:564px;font-size:13.4px;color:#000;">-2.55</i><i class="t" style="left:321.00px;top:564px;font-size:13.4px;color:#000;transform:scaleX(0.8802);">REVERSAL (BIG FLOW)</i><svg class="ic" style="left:468.00px;top:561.00px" width="18" height="18" viewBox="0 0 18 18"><circle cx="9" cy="9" r="7.4" fill="#16c60c" stroke="#0c3f0a" stroke-width="1.3"/></svg><i class="t" style="left:490.00px;top:564px;font-size:13.4px;color:#000;transform:scaleX(0.8839);">SOLID TREND</i><svg class="ic" style="left:619.00px;top:561.00px" width="18" height="18" viewBox="0 0 18 18"><path d="M12.8 5.2 L15.4 2.6" stroke="#23232b" stroke-width="2.2" stroke-linecap="round"/><circle cx="15.9" cy="2.2" r="1.5" fill="#f0f0f4" stroke="#23232b" stroke-width="1.1"/><path d="M.9 4.8 H14 L12.6 12.3 H2.5 Z" fill="#a9a9b6" stroke="#23232b" stroke-width="1.3" stroke-linejoin="round"/><path d="M1.6 7.3 H13.4 M2.2 9.8 H12.9 M4.5 5 L5 12 M7.5 5 V12 M10.6 5 L10.1 12" stroke="#3c3c48" stroke-width=".75"/><path d="M2.5 12.3 L2.1 14 H13 L12.6 12.3" fill="#62626e" stroke="#23232b" stroke-width="1" stroke-linejoin="round"/><circle cx="5" cy="15.5" r="1.6" fill="#f4f4f7" stroke="#23232b" stroke-width="1.1"/><circle cx="10.9" cy="15.5" r="1.6" fill="#f4f4f7" stroke="#23232b" stroke-width="1.1"/></svg><i class="t" style="left:641.00px;top:564px;font-size:13.4px;color:#000;transform:scaleX(0.9221);">PANIC BOTTOM</i><svg class="ic" style="left:780.00px;top:561.00px" width="18" height="18" viewBox="0 0 18 18"><path d="M10.1 1.2 L1.6 9.7 L7.4 10.7 L6.5 16.6 L15.6 8.1 L10.4 7.4 Z" fill="#f6d365" stroke="#2a1a22" stroke-width="1.3" stroke-linejoin="round"/></svg><i class="t" style="left:801.20px;top:564px;font-size:13.4px;color:#ffffff;transform:scaleX(0.8585);">SPEC BUY (REVERSAL SOLID)</i><i class="t" style="left:1014.78px;top:564px;font-size:13.4px;color:#000;transform:scaleX(0.9975);">1</i><i class="t" style="left:1054.78px;top:564px;font-size:13.4px;color:#000;transform:scaleX(0.9972);">12.58</i><i class="t" style="left:1103.75px;top:564px;font-size:13.4px;color:#000;">-4.78</i><i class="t" style="left:1153.00px;top:564px;font-size:13.4px;color:#000;transform:scaleX(0.9971);">1.15</i><i class="t" style="left:1194.50px;top:564px;font-size:13.4px;color:#000;transform:scaleX(0.9971);">1.15</i><i class="t" style="left:1238.65px;top:564px;font-size:13.4px;color:#000;transform:scaleX(0.9453);">96%</i><i class="t" style="left:1271.00px;top:564px;font-size:13.4px;color:#000;transform:scaleX(1.0190);">Doji (Neutral)</i><b class="r" style="left:0px;top:581px;width:46px;height:24px;background:#0b57d0"></b><i class="t" style="left:16.70px;top:587px;font-size:10.6px;color:#fff;font-weight:700;">20</i><b class="r" style="left:0px;top:604px;width:1354px;height:1px;background:#e1e1e1"></b><b class="r" style="left:159px;top:582px;width:1px;height:22px;background:#e1e1e1"></b><b class="r" style="left:222px;top:582px;width:1px;height:22px;background:#e1e1e1"></b><b class="r" style="left:268px;top:582px;width:1px;height:22px;background:#e1e1e1"></b><b class="r" style="left:317px;top:582px;width:1px;height:22px;background:#e1e1e1"></b><b class="r" style="left:463px;top:582px;width:1px;height:22px;background:#e1e1e1"></b><b class="r" style="left:614px;top:582px;width:1px;height:22px;background:#e1e1e1"></b><b class="r" style="left:775px;top:582px;width:1px;height:22px;background:#e1e1e1"></b><b class="r" style="left:988px;top:582px;width:1px;height:22px;background:#e1e1e1"></b><b class="r" style="left:1048px;top:582px;width:1px;height:22px;background:#e1e1e1"></b><b class="r" style="left:1094px;top:582px;width:1px;height:22px;background:#e1e1e1"></b><b class="r" style="left:1143px;top:582px;width:1px;height:22px;background:#e1e1e1"></b><b class="r" style="left:1188px;top:582px;width:1px;height:22px;background:#e1e1e1"></b><b class="r" style="left:1226px;top:582px;width:1px;height:22px;background:#e1e1e1"></b><b class="r" style="left:1267px;top:582px;width:1px;height:22px;background:#e1e1e1"></b><b class="r" style="left:45px;top:582px;width:1px;height:23px;background:#e1e1e1"></b><b class="r" style="left:117px;top:581px;width:43px;height:24px;background:#f5a76a"></b><b class="r" style="left:775px;top:581px;width:214px;height:24px;background:#9900ff"></b><b class="r" style="left:1048px;top:581px;width:47px;height:24px;background:#f9cb9c"></b><b class="r" style="left:1094px;top:581px;width:50px;height:24px;background:#b7e1cd"></b><b class="r" style="left:1143px;top:581px;width:46px;height:24px;background:#ffe599"></b><b class="r" style="left:1188px;top:581px;width:39px;height:24px;background:#58bb8b"></b><b class="r" style="left:1267px;top:581px;width:88px;height:24px;background:#cc0000"></b><i class="t" style="left:52.51px;top:587px;font-size:13.4px;color:#000;transform:scaleX(0.9476);">28 Jan 26</i><i class="t" style="left:123.13px;top:587px;font-size:13.4px;color:#000;transform:scaleX(0.9975);">2530</i><i class="t" style="left:170.51px;top:587px;font-size:13.4px;color:#000;transform:scaleX(0.9652);">-13.6%</i><i class="t" style="left:228.78px;top:587px;font-size:13.4px;color:#000;transform:scaleX(0.9972);">13.71</i><i class="t" style="left:276.28px;top:587px;font-size:13.4px;color:#000;transform:scaleX(0.9972);">83.09</i><i class="t" style="left:321.00px;top:587px;font-size:13.4px;color:#000;transform:scaleX(0.8802);">REVERSAL (BIG FLOW)</i><svg class="ic" style="left:468.00px;top:584.00px" width="18" height="18" viewBox="0 0 18 18"><path d="M1.1 16.7 L3.1 11.3 L6.5 15 Z" fill="#f2b47c" stroke="#2a1608" stroke-width="1.1" stroke-linejoin="round"/><path d="M16.7 .4 L10.6 2.1 L6.2 5.9 L1.1 8.2 L3.3 11 L7.2 14.3 L9.6 16.7 L11.6 14 L11 11.3 L15.9 5.5 Z" fill="url(#rk)" stroke="#0e1c33" stroke-width="1.2" stroke-linejoin="round"/><path d="M16.7 .4 L12.3 1.5 L16.1 5.2 Z" fill="#b8306a" stroke="#0e1c33" stroke-width=".9" stroke-linejoin="round"/><path d="M9.6 6.4 L11.6 8.2" stroke="#aeb9c4" stroke-width="1.6" stroke-linecap="round"/></svg><i class="t" style="left:490.00px;top:587px;font-size:13.4px;color:#000;transform:scaleX(0.8538);">SPIKE (AGGRESSIVE)</i><svg class="ic" style="left:619.00px;top:584.00px" width="18" height="18" viewBox="0 0 18 18"><path d="M12.8 5.2 L15.4 2.6" stroke="#23232b" stroke-width="2.2" stroke-linecap="round"/><circle cx="15.9" cy="2.2" r="1.5" fill="#f0f0f4" stroke="#23232b" stroke-width="1.1"/><path d="M.9 4.8 H14 L12.6 12.3 H2.5 Z" fill="#a9a9b6" stroke="#23232b" stroke-width="1.3" stroke-linejoin="round"/><path d="M1.6 7.3 H13.4 M2.2 9.8 H12.9 M4.5 5 L5 12 M7.5 5 V12 M10.6 5 L10.1 12" stroke="#3c3c48" stroke-width=".75"/><path d="M2.5 12.3 L2.1 14 H13 L12.6 12.3" fill="#62626e" stroke="#23232b" stroke-width="1" stroke-linejoin="round"/><circle cx="5" cy="15.5" r="1.6" fill="#f4f4f7" stroke="#23232b" stroke-width="1.1"/><circle cx="10.9" cy="15.5" r="1.6" fill="#f4f4f7" stroke="#23232b" stroke-width="1.1"/></svg><i class="t" style="left:641.00px;top:587px;font-size:13.4px;color:#000;transform:scaleX(0.9221);">PANIC BOTTOM</i><svg class="ic" style="left:780.00px;top:584.00px" width="18" height="18" viewBox="0 0 18 18"><path d="M10.1 1.2 L1.6 9.7 L7.4 10.7 L6.5 16.6 L15.6 8.1 L10.4 7.4 Z" fill="#f6d365" stroke="#2a1a22" stroke-width="1.3" stroke-linejoin="round"/></svg><i class="t" style="left:801.20px;top:587px;font-size:13.4px;color:#ffffff;transform:scaleX(0.8585);">SPEC BUY (REVERSAL SOLID)</i><i class="t" style="left:1014.78px;top:587px;font-size:13.4px;color:#000;transform:scaleX(0.9975);">1</i><i class="t" style="left:1054.78px;top:587px;font-size:13.4px;color:#000;transform:scaleX(0.9972);">25.51</i><i class="t" style="left:1098.56px;top:587px;font-size:13.4px;color:#000;transform:scaleX(0.9972);">154.59</i><i class="t" style="left:1153.00px;top:587px;font-size:13.4px;color:#000;transform:scaleX(0.9971);">2.00</i><i class="t" style="left:1194.50px;top:587px;font-size:13.4px;color:#000;transform:scaleX(0.9971);">4.36</i><i class="t" style="left:1231.21px;top:587px;font-size:13.4px;color:#000;transform:scaleX(0.9567);">100%</i><i class="t" style="left:1271.00px;top:587px;font-size:13.4px;color:#fff;transform:scaleX(0.9553);">3 BlkCrows (St</i></div><b class="r" style="left:112px;top:140px;width:5px;height:51px;background:#c7c7c7"></b><b class="r" style="left:112px;top:191px;width:5px;height:483px;background:#d0d4dc"></b><b class="r" style="left:0px;top:186px;width:1354px;height:5px;background:#c7c7c7"></b><div class="clip" style="left:0;top:214px;width:1354px;height:333px"><div class="in nb" style="top:-214px;filter:blur(1px)"><b class="r" style="left:0px;top:208px;width:1366px;height:345px;background:#fff"></b><i class="t" style="left:19.35px;top:219px;font-size:10.6px;color:#5f6368;">4</i><b class="r" style="left:0px;top:236px;width:1354px;height:1px;background:#e1e1e1"></b><b class="r" style="left:159px;top:214px;width:1px;height:22px;background:#e1e1e1"></b><b class="r" style="left:222px;top:214px;width:1px;height:22px;background:#e1e1e1"></b><b class="r" style="left:268px;top:214px;width:1px;height:22px;background:#e1e1e1"></b><b class="r" style="left:317px;top:214px;width:1px;height:22px;background:#e1e1e1"></b><b class="r" style="left:463px;top:214px;width:1px;height:22px;background:#e1e1e1"></b><b class="r" style="left:614px;top:214px;width:1px;height:22px;background:#e1e1e1"></b><b class="r" style="left:775px;top:214px;width:1px;height:22px;background:#e1e1e1"></b><b class="r" style="left:988px;top:214px;width:1px;height:22px;background:#e1e1e1"></b><b class="r" style="left:1048px;top:214px;width:1px;height:22px;background:#e1e1e1"></b><b class="r" style="left:1094px;top:214px;width:1px;height:22px;background:#e1e1e1"></b><b class="r" style="left:1143px;top:214px;width:1px;height:22px;background:#e1e1e1"></b><b class="r" style="left:1188px;top:214px;width:1px;height:22px;background:#e1e1e1"></b><b class="r" style="left:1226px;top:214px;width:1px;height:22px;background:#e1e1e1"></b><b class="r" style="left:1267px;top:214px;width:1px;height:22px;background:#e1e1e1"></b><b class="r" style="left:45px;top:214px;width:1px;height:23px;background:#e1e1e1"></b><b class="r" style="left:117px;top:213px;width:43px;height:24px;background:#f6aa69"></b><b class="r" style="left:775px;top:213px;width:214px;height:24px;background:#d9d9d9"></b><b class="r" style="left:1048px;top:213px;width:47px;height:24px;background:#f9cb9c"></b><b class="r" style="left:1143px;top:213px;width:46px;height:24px;background:#ffe599"></b><b class="r" style="left:1188px;top:213px;width:39px;height:24px;background:#f7d5d2"></b><i class="t" style="left:51.45px;top:219px;font-size:13.4px;color:#000;transform:scaleX(0.9594);">23 Feb 26</i><i class="t" style="left:123.13px;top:219px;font-size:13.4px;color:#000;transform:scaleX(0.9975);">2550</i><i class="t" style="left:176.47px;top:219px;font-size:13.4px;color:#000;transform:scaleX(0.9513);">5.2%</i><i class="t" style="left:228.78px;top:219px;font-size:13.4px;color:#000;transform:scaleX(1.0277);">11.40</i><i class="t" style="left:277.75px;top:219px;font-size:13.4px;color:#000;">-1.27</i><i class="t" style="left:321.00px;top:219px;font-size:13.4px;color:#000;transform:scaleX(0.8662);">SPECULATIVE BUY</i><svg class="ic" style="left:468.00px;top:216.00px" width="18" height="18" viewBox="0 0 18 18"><circle cx="9" cy="9" r="7.4" fill="#16c60c" stroke="#0c3f0a" stroke-width="1.3"/></svg><i class="t" style="left:490.00px;top:219px;font-size:13.4px;color:#000;transform:scaleX(0.8617);">SOLID KICKOFF</i><svg class="ic" style="left:619.00px;top:216.00px" width="18" height="18" viewBox="0 0 18 18"><path d="M1.1 16.7 L3.1 11.3 L6.5 15 Z" fill="#f2b47c" stroke="#2a1608" stroke-width="1.1" stroke-linejoin="round"/><path d="M16.7 .4 L10.6 2.1 L6.2 5.9 L1.1 8.2 L3.3 11 L7.2 14.3 L9.6 16.7 L11.6 14 L11 11.3 L15.9 5.5 Z" fill="url(#rk)" stroke="#0e1c33" stroke-width="1.2" stroke-linejoin="round"/><path d="M16.7 .4 L12.3 1.5 L16.1 5.2 Z" fill="#b8306a" stroke="#0e1c33" stroke-width=".9" stroke-linejoin="round"/><path d="M9.6 6.4 L11.6 8.2" stroke="#aeb9c4" stroke-width="1.6" stroke-linecap="round"/></svg><i class="t" style="left:641.00px;top:219px;font-size:13.4px;color:#000;transform:scaleX(0.8917);">EXPANSION</i><svg class="ic" style="left:780.00px;top:216.00px" width="18" height="18" viewBox="0 0 18 18"><path d="M1 9 C4 3.6 14 3.6 17 9 C14 14.4 4 14.4 1 9 Z" fill="#fafafa" stroke="#8d8d95" stroke-width="1.4"/><circle cx="9" cy="9" r="3.3" fill="#b5541c"/><circle cx="9" cy="9" r="1.5" fill="#5a2308"/></svg><i class="t" style="left:802.00px;top:219px;font-size:13.4px;color:#8e8e8e;transform:scaleX(0.9139);">WAIT &amp; SEE</i><i class="t" style="left:1014.78px;top:219px;font-size:13.4px;color:#000;transform:scaleX(0.9975);">5</i><i class="t" style="left:1054.78px;top:219px;font-size:13.4px;color:#000;transform:scaleX(0.9972);">21.04</i><i class="t" style="left:1103.75px;top:219px;font-size:13.4px;color:#000;">-2.34</i><i class="t" style="left:1153.00px;top:219px;font-size:13.4px;color:#000;transform:scaleX(0.9971);">1.60</i><i class="t" style="left:1192.25px;top:219px;font-size:13.4px;color:#000;">-0.77</i><i class="t" style="left:1238.65px;top:219px;font-size:13.4px;color:#000;transform:scaleX(0.9453);">16%</i><i class="t" style="left:1271.00px;top:219px;font-size:13.4px;color:#000;transform:scaleX(1.0062);">-</i><b class="r" style="left:0px;top:236px;width:4px;height:1px;background:#4a4a4a"></b><i class="t" style="left:19.35px;top:242px;font-size:10.6px;color:#5f6368;">5</i><b class="r" style="left:0px;top:259px;width:1354px;height:1px;background:#e1e1e1"></b><b class="r" style="left:159px;top:237px;width:1px;height:22px;background:#e1e1e1"></b><b class="r" style="left:222px;top:237px;width:1px;height:22px;background:#e1e1e1"></b><b class="r" style="left:268px;top:237px;width:1px;height:22px;background:#e1e1e1"></b><b class="r" style="left:317px;top:237px;width:1px;height:22px;background:#e1e1e1"></b><b class="r" style="left:463px;top:237px;width:1px;height:22px;background:#e1e1e1"></b><b class="r" style="left:614px;top:237px;width:1px;height:22px;background:#e1e1e1"></b><b class="r" style="left:775px;top:237px;width:1px;height:22px;background:#e1e1e1"></b><b class="r" style="left:988px;top:237px;width:1px;height:22px;background:#e1e1e1"></b><b class="r" style="left:1048px;top:237px;width:1px;height:22px;background:#e1e1e1"></b><b class="r" style="left:1094px;top:237px;width:1px;height:22px;background:#e1e1e1"></b><b class="r" style="left:1143px;top:237px;width:1px;height:22px;background:#e1e1e1"></b><b class="r" style="left:1188px;top:237px;width:1px;height:22px;background:#e1e1e1"></b><b class="r" style="left:1226px;top:237px;width:1px;height:22px;background:#e1e1e1"></b><b class="r" style="left:1267px;top:237px;width:1px;height:22px;background:#e1e1e1"></b><b class="r" style="left:45px;top:237px;width:1px;height:23px;background:#e1e1e1"></b><b class="r" style="left:117px;top:236px;width:43px;height:24px;background:#f3a26b"></b><b class="r" style="left:775px;top:236px;width:214px;height:24px;background:#cc0000"></b><b class="r" style="left:1188px;top:236px;width:39px;height:24px;background:#ec9d96"></b><i class="t" style="left:51.45px;top:242px;font-size:13.4px;color:#000;transform:scaleX(0.9594);">20 Feb 26</i><i class="t" style="left:123.13px;top:242px;font-size:13.4px;color:#000;transform:scaleX(0.9975);">2500</i><i class="t" style="left:176.47px;top:242px;font-size:13.4px;color:#000;transform:scaleX(0.9513);">4.1%</i><i class="t" style="left:232.50px;top:242px;font-size:13.4px;color:#000;transform:scaleX(0.9971);">0.50</i><i class="t" style="left:277.75px;top:242px;font-size:13.4px;color:#000;">-6.77</i><i class="t" style="left:321.00px;top:242px;font-size:13.4px;color:#000;transform:scaleX(0.8706);">STRONG BEARISH</i><svg class="ic" style="left:468.00px;top:239.00px" width="18" height="18" viewBox="0 0 18 18"><circle cx="9" cy="9" r="7.4" fill="#fff100" stroke="#8f8a12" stroke-width="1.3"/></svg><i class="t" style="left:490.00px;top:242px;font-size:13.4px;color:#000;transform:scaleX(0.9231);">WEAK / NOISE</i><svg class="ic" style="left:619.00px;top:239.00px" width="18" height="18" viewBox="0 0 18 18"><path d="M1.6 9.2 L4.8 3.3 L8.4 6.3 L11 3 L15.8 13.6" fill="none" stroke="#33360a" stroke-width="3.2" stroke-linecap="round" stroke-linejoin="round"/><path d="M1.6 9.2 L4.8 3.3 L8.4 6.3 L11 3 L15.8 13.6" fill="none" stroke="#d2de3c" stroke-width="1.5" stroke-linecap="round" stroke-linejoin="round"/></svg><i class="t" style="left:641.00px;top:242px;font-size:13.4px;color:#000;transform:scaleX(0.8744);">HEALTHY PULLBACK</i><svg class="ic" style="left:780.00px;top:239.00px" width="18" height="18" viewBox="0 0 18 18"><circle cx="9" cy="9" r="7.3" fill="#f03a17" stroke="#8b0a0a" stroke-width="1.3"/><rect x="3.6" y="7.3" width="10.8" height="3.4" rx="0.6" fill="#fff"/></svg><i class="t" style="left:802.00px;top:242px;font-size:13.4px;color:#ffffff;transform:scaleX(0.9291);">AVOID DOWNTREND</i><i class="t" style="left:1014.78px;top:242px;font-size:13.4px;color:#000;transform:scaleX(0.9975);">3</i><i class="t" style="left:1058.50px;top:242px;font-size:13.4px;color:#000;transform:scaleX(0.9971);">0.94</i><i class="t" style="left:1100.04px;top:242px;font-size:13.4px;color:#000;">-12.75</i><i class="t" style="left:1153.00px;top:242px;font-size:13.4px;color:#000;transform:scaleX(0.9971);">0.61</i><i class="t" style="left:1192.25px;top:242px;font-size:13.4px;color:#000;">-1.26</i><i class="t" style="left:1238.65px;top:242px;font-size:13.4px;color:#000;transform:scaleX(0.9453);">12%</i><i class="t" style="left:1271.00px;top:242px;font-size:13.4px;color:#000;transform:scaleX(1.0062);">-</i><b class="r" style="left:0px;top:259px;width:4px;height:1px;background:#4a4a4a"></b><i class="t" style="left:19.35px;top:265px;font-size:10.6px;color:#5f6368;">6</i><b class="r" style="left:0px;top:282px;width:1354px;height:1px;background:#e1e1e1"></b><b class="r" style="left:159px;top:260px;width:1px;height:22px;background:#e1e1e1"></b><b class="r" style="left:222px;top:260px;width:1px;height:22px;background:#e1e1e1"></b><b class="r" style="left:268px;top:260px;width:1px;height:22px;background:#e1e1e1"></b><b class="r" style="left:317px;top:260px;width:1px;height:22px;background:#e1e1e1"></b><b class="r" style="left:463px;top:260px;width:1px;height:22px;background:#e1e1e1"></b><b class="r" style="left:614px;top:260px;width:1px;height:22px;background:#e1e1e1"></b><b class="r" style="left:775px;top:260px;width:1px;height:22px;background:#e1e1e1"></b><b class="r" style="left:988px;top:260px;width:1px;height:22px;background:#e1e1e1"></b><b class="r" style="left:1048px;top:260px;width:1px;height:22px;background:#e1e1e1"></b><b class="r" style="left:1094px;top:260px;width:1px;height:22px;background:#e1e1e1"></b><b class="r" style="left:1143px;top:260px;width:1px;height:22px;background:#e1e1e1"></b><b class="r" style="left:1188px;top:260px;width:1px;height:22px;background:#e1e1e1"></b><b class="r" style="left:1226px;top:260px;width:1px;height:22px;background:#e1e1e1"></b><b class="r" style="left:1267px;top:260px;width:1px;height:22px;background:#e1e1e1"></b><b class="r" style="left:45px;top:260px;width:1px;height:23px;background:#e1e1e1"></b><b class="r" style="left:117px;top:259px;width:43px;height:24px;background:#f4a36b"></b><b class="r" style="left:775px;top:259px;width:214px;height:24px;background:#cc0000"></b><i class="t" style="left:51.45px;top:265px;font-size:13.4px;color:#000;transform:scaleX(0.9594);">19 Feb 26</i><i class="t" style="left:123.13px;top:265px;font-size:13.4px;color:#000;transform:scaleX(0.9975);">2510</i><i class="t" style="left:176.47px;top:265px;font-size:13.4px;color:#000;transform:scaleX(0.9513);">5.2%</i><i class="t" style="left:226.54px;top:265px;font-size:13.4px;color:#000;">-16.33</i><i class="t" style="left:274.04px;top:265px;font-size:13.4px;color:#000;">-28.12</i><i class="t" style="left:321.00px;top:265px;font-size:13.4px;color:#000;transform:scaleX(0.8706);">STRONG BEARISH</i><svg class="ic" style="left:468.00px;top:262.00px" width="18" height="18" viewBox="0 0 18 18"><circle cx="9" cy="9" r="7.4" fill="#fff100" stroke="#8f8a12" stroke-width="1.3"/></svg><i class="t" style="left:490.00px;top:265px;font-size:13.4px;color:#000;transform:scaleX(0.9446);">NORMAL OUT</i><svg class="ic" style="left:619.00px;top:262.00px" width="18" height="18" viewBox="0 0 18 18"><path d="M1.6 9.2 L4.8 3.3 L8.4 6.3 L11 3 L15.8 13.6" fill="none" stroke="#33360a" stroke-width="3.2" stroke-linecap="round" stroke-linejoin="round"/><path d="M1.6 9.2 L4.8 3.3 L8.4 6.3 L11 3 L15.8 13.6" fill="none" stroke="#d2de3c" stroke-width="1.5" stroke-linecap="round" stroke-linejoin="round"/></svg><i class="t" style="left:641.00px;top:265px;font-size:13.4px;color:#000;transform:scaleX(0.8744);">HEALTHY PULLBACK</i><svg class="ic" style="left:780.00px;top:262.00px" width="18" height="18" viewBox="0 0 18 18"><circle cx="9" cy="9" r="7.3" fill="#f03a17" stroke="#8b0a0a" stroke-width="1.3"/><rect x="3.6" y="7.3" width="10.8" height="3.4" rx="0.6" fill="#fff"/></svg><i class="t" style="left:802.00px;top:265px;font-size:13.4px;color:#ffffff;transform:scaleX(0.9291);">AVOID DOWNTREND</i><i class="t" style="left:1014.78px;top:265px;font-size:13.4px;color:#000;transform:scaleX(0.9975);">1</i><i class="t" style="left:1052.54px;top:265px;font-size:13.4px;color:#000;">-30.62</i><i class="t" style="left:1100.04px;top:265px;font-size:13.4px;color:#000;">-52.73</i><i class="t" style="left:1150.75px;top:265px;font-size:13.4px;color:#000;">-0.85</i><i class="t" style="left:1192.25px;top:265px;font-size:13.4px;color:#000;">-0.33</i><i class="t" style="left:1238.65px;top:265px;font-size:13.4px;color:#000;transform:scaleX(0.9453);">44%</i><i class="t" style="left:1271.00px;top:265px;font-size:13.4px;color:#000;transform:scaleX(1.0062);">-</i><b class="r" style="left:0px;top:282px;width:4px;height:1px;background:#4a4a4a"></b><i class="t" style="left:19.35px;top:288px;font-size:10.6px;color:#5f6368;">7</i><b class="r" style="left:0px;top:305px;width:1354px;height:1px;background:#e1e1e1"></b><b class="r" style="left:159px;top:283px;width:1px;height:22px;background:#e1e1e1"></b><b class="r" style="left:222px;top:283px;width:1px;height:22px;background:#e1e1e1"></b><b class="r" style="left:268px;top:283px;width:1px;height:22px;background:#e1e1e1"></b><b class="r" style="left:317px;top:283px;width:1px;height:22px;background:#e1e1e1"></b><b class="r" style="left:463px;top:283px;width:1px;height:22px;background:#e1e1e1"></b><b class="r" style="left:614px;top:283px;width:1px;height:22px;background:#e1e1e1"></b><b class="r" style="left:775px;top:283px;width:1px;height:22px;background:#e1e1e1"></b><b class="r" style="left:988px;top:283px;width:1px;height:22px;background:#e1e1e1"></b><b class="r" style="left:1048px;top:283px;width:1px;height:22px;background:#e1e1e1"></b><b class="r" style="left:1094px;top:283px;width:1px;height:22px;background:#e1e1e1"></b><b class="r" style="left:1143px;top:283px;width:1px;height:22px;background:#e1e1e1"></b><b class="r" style="left:1188px;top:283px;width:1px;height:22px;background:#e1e1e1"></b><b class="r" style="left:1226px;top:283px;width:1px;height:22px;background:#e1e1e1"></b><b class="r" style="left:1267px;top:283px;width:1px;height:22px;background:#e1e1e1"></b><b class="r" style="left:45px;top:283px;width:1px;height:23px;background:#e1e1e1"></b><b class="r" style="left:117px;top:282px;width:43px;height:24px;background:#f6ac69"></b><b class="r" style="left:775px;top:282px;width:214px;height:24px;background:#cc0000"></b><b class="r" style="left:1188px;top:282px;width:39px;height:24px;background:#d0ebdd"></b><i class="t" style="left:51.45px;top:288px;font-size:13.4px;color:#000;transform:scaleX(0.9594);">18 Feb 26</i><i class="t" style="left:123.13px;top:288px;font-size:13.4px;color:#000;transform:scaleX(0.9975);">2560</i><i class="t" style="left:176.47px;top:288px;font-size:13.4px;color:#000;transform:scaleX(0.9513);">7.8%</i><i class="t" style="left:230.25px;top:288px;font-size:13.4px;color:#000;">-8.39</i><i class="t" style="left:280.00px;top:288px;font-size:13.4px;color:#000;transform:scaleX(0.9971);">1.10</i><i class="t" style="left:321.00px;top:288px;font-size:13.4px;color:#000;transform:scaleX(0.8706);">STRONG BEARISH</i><svg class="ic" style="left:468.00px;top:285.00px" width="18" height="18" viewBox="0 0 18 18"><path d="M9 1.6 L16.6 15.6 H1.4 Z" fill="#f3e81c" stroke="#6f6714" stroke-width="1.4" stroke-linejoin="round"/><path d="M9 6.2 V11" stroke="#6f6714" stroke-width="1.7" stroke-linecap="round"/><circle cx="9" cy="13.3" r="1" fill="#6f6714"/></svg><i class="t" style="left:490.00px;top:288px;font-size:13.4px;color:#000;transform:scaleX(0.8779);">DISTRIB (FF TRAP)</i><svg class="ic" style="left:619.00px;top:285.00px" width="18" height="18" viewBox="0 0 18 18"><path d="M1.1 16.7 L3.1 11.3 L6.5 15 Z" fill="#f2b47c" stroke="#2a1608" stroke-width="1.1" stroke-linejoin="round"/><path d="M16.7 .4 L10.6 2.1 L6.2 5.9 L1.1 8.2 L3.3 11 L7.2 14.3 L9.6 16.7 L11.6 14 L11 11.3 L15.9 5.5 Z" fill="url(#rk)" stroke="#0e1c33" stroke-width="1.2" stroke-linejoin="round"/><path d="M16.7 .4 L12.3 1.5 L16.1 5.2 Z" fill="#b8306a" stroke="#0e1c33" stroke-width=".9" stroke-linejoin="round"/><path d="M9.6 6.4 L11.6 8.2" stroke="#aeb9c4" stroke-width="1.6" stroke-linecap="round"/></svg><i class="t" style="left:641.00px;top:288px;font-size:13.4px;color:#000;transform:scaleX(0.8917);">EXPANSION</i><svg class="ic" style="left:780.00px;top:285.00px" width="18" height="18" viewBox="0 0 18 18"><circle cx="9" cy="9" r="7.3" fill="#f03a17" stroke="#8b0a0a" stroke-width="1.3"/><rect x="3.6" y="7.3" width="10.8" height="3.4" rx="0.6" fill="#fff"/></svg><i class="t" style="left:802.00px;top:288px;font-size:13.4px;color:#ffffff;transform:scaleX(0.8700);">TRAP DETECTED (EXIT)</i><i class="t" style="left:1014.78px;top:288px;font-size:13.4px;color:#000;transform:scaleX(0.9975);">1</i><i class="t" style="left:1052.54px;top:288px;font-size:13.4px;color:#000;">-15.43</i><i class="t" style="left:1106.00px;top:288px;font-size:13.4px;color:#000;transform:scaleX(0.9971);">2.02</i><i class="t" style="left:1150.75px;top:288px;font-size:13.4px;color:#000;">-0.18</i><i class="t" style="left:1194.50px;top:288px;font-size:13.4px;color:#000;transform:scaleX(0.9971);">0.63</i><i class="t" style="left:1238.65px;top:288px;font-size:13.4px;color:#000;transform:scaleX(0.9453);">60%</i><i class="t" style="left:1271.00px;top:288px;font-size:13.4px;color:#000;transform:scaleX(1.0062);">-</i><b class="r" style="left:0px;top:305px;width:4px;height:1px;background:#4a4a4a"></b><i class="t" style="left:19.35px;top:311px;font-size:10.6px;color:#5f6368;">8</i><b class="r" style="left:0px;top:328px;width:1354px;height:1px;background:#e1e1e1"></b><b class="r" style="left:159px;top:306px;width:1px;height:22px;background:#e1e1e1"></b><b class="r" style="left:222px;top:306px;width:1px;height:22px;background:#e1e1e1"></b><b class="r" style="left:268px;top:306px;width:1px;height:22px;background:#e1e1e1"></b><b class="r" style="left:317px;top:306px;width:1px;height:22px;background:#e1e1e1"></b><b class="r" style="left:463px;top:306px;width:1px;height:22px;background:#e1e1e1"></b><b class="r" style="left:614px;top:306px;width:1px;height:22px;background:#e1e1e1"></b><b class="r" style="left:775px;top:306px;width:1px;height:22px;background:#e1e1e1"></b><b class="r" style="left:988px;top:306px;width:1px;height:22px;background:#e1e1e1"></b><b class="r" style="left:1048px;top:306px;width:1px;height:22px;background:#e1e1e1"></b><b class="r" style="left:1094px;top:306px;width:1px;height:22px;background:#e1e1e1"></b><b class="r" style="left:1143px;top:306px;width:1px;height:22px;background:#e1e1e1"></b><b class="r" style="left:1188px;top:306px;width:1px;height:22px;background:#e1e1e1"></b><b class="r" style="left:1226px;top:306px;width:1px;height:22px;background:#e1e1e1"></b><b class="r" style="left:1267px;top:306px;width:1px;height:22px;background:#e1e1e1"></b><b class="r" style="left:45px;top:306px;width:1px;height:23px;background:#e1e1e1"></b><b class="r" style="left:117px;top:305px;width:43px;height:24px;background:#f1996d"></b><b class="r" style="left:775px;top:305px;width:214px;height:24px;background:#cc0000"></b><b class="r" style="left:1188px;top:305px;width:39px;height:24px;background:#efada7"></b><i class="t" style="left:51.45px;top:311px;font-size:13.4px;color:#000;transform:scaleX(0.9594);">13 Feb 26</i><i class="t" style="left:123.13px;top:311px;font-size:13.4px;color:#000;transform:scaleX(0.9975);">2450</i><i class="t" style="left:176.47px;top:311px;font-size:13.4px;color:#000;transform:scaleX(0.9513);">4.5%</i><i class="t" style="left:230.25px;top:311px;font-size:13.4px;color:#000;">-2.20</i><i class="t" style="left:280.00px;top:311px;font-size:13.4px;color:#000;transform:scaleX(0.9971);">1.95</i><i class="t" style="left:321.00px;top:311px;font-size:13.4px;color:#000;transform:scaleX(0.8706);">STRONG BEARISH</i><svg class="ic" style="left:468.00px;top:308.00px" width="18" height="18" viewBox="0 0 18 18"><path d="M9 1.6 L16.6 15.6 H1.4 Z" fill="#f3e81c" stroke="#6f6714" stroke-width="1.4" stroke-linejoin="round"/><path d="M9 6.2 V11" stroke="#6f6714" stroke-width="1.7" stroke-linecap="round"/><circle cx="9" cy="13.3" r="1" fill="#6f6714"/></svg><i class="t" style="left:490.00px;top:311px;font-size:13.4px;color:#000;transform:scaleX(0.8779);">DISTRIB (FF TRAP)</i><svg class="ic" style="left:619.00px;top:308.00px" width="18" height="18" viewBox="0 0 18 18"><path d="M1.6 9.2 L4.8 3.3 L8.4 6.3 L11 3 L15.8 13.6" fill="none" stroke="#33360a" stroke-width="3.2" stroke-linecap="round" stroke-linejoin="round"/><path d="M1.6 9.2 L4.8 3.3 L8.4 6.3 L11 3 L15.8 13.6" fill="none" stroke="#d2de3c" stroke-width="1.5" stroke-linecap="round" stroke-linejoin="round"/></svg><i class="t" style="left:641.00px;top:311px;font-size:13.4px;color:#000;transform:scaleX(0.8744);">HEALTHY PULLBACK</i><svg class="ic" style="left:780.00px;top:308.00px" width="18" height="18" viewBox="0 0 18 18"><circle cx="9" cy="9" r="7.3" fill="#f03a17" stroke="#8b0a0a" stroke-width="1.3"/><rect x="3.6" y="7.3" width="10.8" height="3.4" rx="0.6" fill="#fff"/></svg><i class="t" style="left:802.00px;top:311px;font-size:13.4px;color:#ffffff;transform:scaleX(0.8700);">TRAP DETECTED (EXIT)</i><i class="t" style="left:1014.78px;top:311px;font-size:13.4px;color:#000;transform:scaleX(0.9975);">4</i><i class="t" style="left:1056.25px;top:311px;font-size:13.4px;color:#000;">-4.23</i><i class="t" style="left:1106.00px;top:311px;font-size:13.4px;color:#000;transform:scaleX(0.9971);">3.75</i><i class="t" style="left:1153.00px;top:311px;font-size:13.4px;color:#000;transform:scaleX(0.9971);">0.37</i><i class="t" style="left:1192.25px;top:311px;font-size:13.4px;color:#000;">-1.12</i><i class="t" style="left:1246.08px;top:311px;font-size:13.4px;color:#000;transform:scaleX(0.9252);">4%</i><i class="t" style="left:1271.00px;top:311px;font-size:13.4px;color:#000;transform:scaleX(1.0062);">-</i><b class="r" style="left:0px;top:328px;width:4px;height:1px;background:#4a4a4a"></b><i class="t" style="left:19.35px;top:334px;font-size:10.6px;color:#5f6368;">9</i><b class="r" style="left:0px;top:351px;width:1354px;height:1px;background:#e1e1e1"></b><b class="r" style="left:159px;top:329px;width:1px;height:22px;background:#e1e1e1"></b><b class="r" style="left:222px;top:329px;width:1px;height:22px;background:#e1e1e1"></b><b class="r" style="left:268px;top:329px;width:1px;height:22px;background:#e1e1e1"></b><b class="r" style="left:317px;top:329px;width:1px;height:22px;background:#e1e1e1"></b><b class="r" style="left:463px;top:329px;width:1px;height:22px;background:#e1e1e1"></b><b class="r" style="left:614px;top:329px;width:1px;height:22px;background:#e1e1e1"></b><b class="r" style="left:775px;top:329px;width:1px;height:22px;background:#e1e1e1"></b><b class="r" style="left:988px;top:329px;width:1px;height:22px;background:#e1e1e1"></b><b class="r" style="left:1048px;top:329px;width:1px;height:22px;background:#e1e1e1"></b><b class="r" style="left:1094px;top:329px;width:1px;height:22px;background:#e1e1e1"></b><b class="r" style="left:1143px;top:329px;width:1px;height:22px;background:#e1e1e1"></b><b class="r" style="left:1188px;top:329px;width:1px;height:22px;background:#e1e1e1"></b><b class="r" style="left:1226px;top:329px;width:1px;height:22px;background:#e1e1e1"></b><b class="r" style="left:1267px;top:329px;width:1px;height:22px;background:#e1e1e1"></b><b class="r" style="left:45px;top:329px;width:1px;height:23px;background:#e1e1e1"></b><b class="r" style="left:117px;top:328px;width:43px;height:24px;background:#f29c6c"></b><b class="r" style="left:775px;top:328px;width:214px;height:24px;background:#f9cb9c"></b><b class="r" style="left:1188px;top:328px;width:39px;height:24px;background:#87cfab"></b><i class="t" style="left:51.45px;top:334px;font-size:13.4px;color:#000;transform:scaleX(0.9594);">12 Feb 26</i><i class="t" style="left:123.13px;top:334px;font-size:13.4px;color:#000;transform:scaleX(0.9975);">2470</i><i class="t" style="left:176.47px;top:334px;font-size:13.4px;color:#000;transform:scaleX(0.9513);">5.2%</i><i class="t" style="left:226.54px;top:334px;font-size:13.4px;color:#000;">-12.49</i><i class="t" style="left:274.04px;top:334px;font-size:13.4px;color:#000;">-56.78</i><i class="t" style="left:321.00px;top:334px;font-size:13.4px;color:#000;transform:scaleX(0.8706);">STRONG BEARISH</i><svg class="ic" style="left:468.00px;top:331.00px" width="18" height="18" viewBox="0 0 18 18"><circle cx="9" cy="9" r="7.4" fill="#fff100" stroke="#8f8a12" stroke-width="1.3"/></svg><i class="t" style="left:490.00px;top:334px;font-size:13.4px;color:#000;transform:scaleX(0.8940);">PROFIT TAKING</i><svg class="ic" style="left:619.00px;top:331.00px" width="18" height="18" viewBox="0 0 18 18"><path d="M1.1 16.7 L3.1 11.3 L6.5 15 Z" fill="#f2b47c" stroke="#2a1608" stroke-width="1.1" stroke-linejoin="round"/><path d="M16.7 .4 L10.6 2.1 L6.2 5.9 L1.1 8.2 L3.3 11 L7.2 14.3 L9.6 16.7 L11.6 14 L11 11.3 L15.9 5.5 Z" fill="url(#rk)" stroke="#0e1c33" stroke-width="1.2" stroke-linejoin="round"/><path d="M16.7 .4 L12.3 1.5 L16.1 5.2 Z" fill="#b8306a" stroke="#0e1c33" stroke-width=".9" stroke-linejoin="round"/><path d="M9.6 6.4 L11.6 8.2" stroke="#aeb9c4" stroke-width="1.6" stroke-linecap="round"/></svg><i class="t" style="left:641.00px;top:334px;font-size:13.4px;color:#000;transform:scaleX(0.8917);">EXPANSION</i><svg class="ic" style="left:780.00px;top:331.00px" width="18" height="18" viewBox="0 0 18 18"><path d="M9 1.6 L16.6 15.6 H1.4 Z" fill="#f3e81c" stroke="#6f6714" stroke-width="1.4" stroke-linejoin="round"/><path d="M9 6.2 V11" stroke="#6f6714" stroke-width="1.7" stroke-linecap="round"/><circle cx="9" cy="13.3" r="1" fill="#6f6714"/></svg><i class="t" style="left:802.00px;top:334px;font-size:13.4px;color:#5c4a2c;transform:scaleX(0.8887);">PRICE UP (PROFIT TAKING)</i><i class="t" style="left:1014.78px;top:334px;font-size:13.4px;color:#000;transform:scaleX(0.9975);">1</i><i class="t" style="left:1052.54px;top:334px;font-size:13.4px;color:#000;">-23.80</i><i class="t" style="left:1096.32px;top:334px;font-size:13.4px;color:#000;">-108.20</i><i class="t" style="left:1150.75px;top:334px;font-size:13.4px;color:#000;">-0.58</i><i class="t" style="left:1194.50px;top:334px;font-size:13.4px;color:#000;transform:scaleX(0.9971);">2.00</i><i class="t" style="left:1238.65px;top:334px;font-size:13.4px;color:#000;transform:scaleX(0.9453);">84%</i><i class="t" style="left:1271.00px;top:334px;font-size:13.4px;color:#000;transform:scaleX(1.0190);">Doji (Neutral)</i><b class="r" style="left:0px;top:351px;width:4px;height:1px;background:#4a4a4a"></b><i class="t" style="left:16.40px;top:357px;font-size:10.6px;color:#5f6368;">10</i><b class="r" style="left:0px;top:374px;width:1354px;height:1px;background:#e1e1e1"></b><b class="r" style="left:159px;top:352px;width:1px;height:22px;background:#e1e1e1"></b><b class="r" style="left:222px;top:352px;width:1px;height:22px;background:#e1e1e1"></b><b class="r" style="left:268px;top:352px;width:1px;height:22px;background:#e1e1e1"></b><b class="r" style="left:317px;top:352px;width:1px;height:22px;background:#e1e1e1"></b><b class="r" style="left:463px;top:352px;width:1px;height:22px;background:#e1e1e1"></b><b class="r" style="left:614px;top:352px;width:1px;height:22px;background:#e1e1e1"></b><b class="r" style="left:775px;top:352px;width:1px;height:22px;background:#e1e1e1"></b><b class="r" style="left:988px;top:352px;width:1px;height:22px;background:#e1e1e1"></b><b class="r" style="left:1048px;top:352px;width:1px;height:22px;background:#e1e1e1"></b><b class="r" style="left:1094px;top:352px;width:1px;height:22px;background:#e1e1e1"></b><b class="r" style="left:1143px;top:352px;width:1px;height:22px;background:#e1e1e1"></b><b class="r" style="left:1188px;top:352px;width:1px;height:22px;background:#e1e1e1"></b><b class="r" style="left:1226px;top:352px;width:1px;height:22px;background:#e1e1e1"></b><b class="r" style="left:1267px;top:352px;width:1px;height:22px;background:#e1e1e1"></b><b class="r" style="left:45px;top:352px;width:1px;height:23px;background:#e1e1e1"></b><b class="r" style="left:117px;top:351px;width:43px;height:24px;background:#f1986d"></b><b class="r" style="left:775px;top:351px;width:214px;height:24px;background:#cc0000"></b><b class="r" style="left:1143px;top:351px;width:46px;height:24px;background:#e06666"></b><b class="r" style="left:1188px;top:351px;width:39px;height:24px;background:#57bb8a"></b><i class="t" style="left:51.45px;top:357px;font-size:13.4px;color:#000;transform:scaleX(0.9755);">11 Feb 26</i><i class="t" style="left:123.13px;top:357px;font-size:13.4px;color:#000;transform:scaleX(0.9975);">2440</i><i class="t" style="left:176.47px;top:357px;font-size:13.4px;color:#000;transform:scaleX(0.9513);">3.7%</i><i class="t" style="left:226.54px;top:357px;font-size:13.4px;color:#000;">-22.55</i><i class="t" style="left:274.04px;top:357px;font-size:13.4px;color:#000;">-48.64</i><i class="t" style="left:321.00px;top:357px;font-size:13.4px;color:#000;transform:scaleX(0.8706);">STRONG BEARISH</i><svg class="ic" style="left:468.00px;top:354.00px" width="18" height="18" viewBox="0 0 18 18"><circle cx="9" cy="9" r="7.4" fill="#e81224" stroke="#7c0a14" stroke-width="1.3"/></svg><i class="t" style="left:490.00px;top:357px;font-size:13.4px;color:#000;transform:scaleX(0.9092);">MASSIVE OUT</i><svg class="ic" style="left:619.00px;top:354.00px" width="18" height="18" viewBox="0 0 18 18"><path d="M1.1 16.7 L3.1 11.3 L6.5 15 Z" fill="#f2b47c" stroke="#2a1608" stroke-width="1.1" stroke-linejoin="round"/><path d="M16.7 .4 L10.6 2.1 L6.2 5.9 L1.1 8.2 L3.3 11 L7.2 14.3 L9.6 16.7 L11.6 14 L11 11.3 L15.9 5.5 Z" fill="url(#rk)" stroke="#0e1c33" stroke-width="1.2" stroke-linejoin="round"/><path d="M16.7 .4 L12.3 1.5 L16.1 5.2 Z" fill="#b8306a" stroke="#0e1c33" stroke-width=".9" stroke-linejoin="round"/><path d="M9.6 6.4 L11.6 8.2" stroke="#aeb9c4" stroke-width="1.6" stroke-linecap="round"/></svg><i class="t" style="left:641.00px;top:357px;font-size:13.4px;color:#000;transform:scaleX(0.8917);">EXPANSION</i><svg class="ic" style="left:780.00px;top:354.00px" width="18" height="18" viewBox="0 0 18 18"><circle cx="9" cy="9" r="7.3" fill="#f03a17" stroke="#8b0a0a" stroke-width="1.3"/><rect x="3.6" y="7.3" width="10.8" height="3.4" rx="0.6" fill="#fff"/></svg><i class="t" style="left:802.00px;top:357px;font-size:13.4px;color:#ffffff;transform:scaleX(0.8864);">TRAP (PRICE UP, BANDAR EXIT)</i><i class="t" style="left:1014.78px;top:357px;font-size:13.4px;color:#000;transform:scaleX(0.9975);">1</i><i class="t" style="left:1052.54px;top:357px;font-size:13.4px;color:#000;">-43.50</i><i class="t" style="left:1100.04px;top:357px;font-size:13.4px;color:#000;">-93.83</i><i class="t" style="left:1150.75px;top:357px;font-size:13.4px;color:#000;">-1.55</i><i class="t" style="left:1194.50px;top:357px;font-size:13.4px;color:#000;transform:scaleX(0.9971);">4.41</i><i class="t" style="left:1238.65px;top:357px;font-size:13.4px;color:#000;transform:scaleX(0.9453);">72%</i><i class="t" style="left:1271.00px;top:357px;font-size:13.4px;color:#000;transform:scaleX(1.0062);">-</i><b class="r" style="left:0px;top:374px;width:4px;height:1px;background:#4a4a4a"></b><i class="t" style="left:16.80px;top:380px;font-size:10.6px;color:#5f6368;">11</i><b class="r" style="left:0px;top:397px;width:1354px;height:1px;background:#e1e1e1"></b><b class="r" style="left:159px;top:375px;width:1px;height:22px;background:#e1e1e1"></b><b class="r" style="left:222px;top:375px;width:1px;height:22px;background:#e1e1e1"></b><b class="r" style="left:268px;top:375px;width:1px;height:22px;background:#e1e1e1"></b><b class="r" style="left:317px;top:375px;width:1px;height:22px;background:#e1e1e1"></b><b class="r" style="left:463px;top:375px;width:1px;height:22px;background:#e1e1e1"></b><b class="r" style="left:614px;top:375px;width:1px;height:22px;background:#e1e1e1"></b><b class="r" style="left:775px;top:375px;width:1px;height:22px;background:#e1e1e1"></b><b class="r" style="left:988px;top:375px;width:1px;height:22px;background:#e1e1e1"></b><b class="r" style="left:1048px;top:375px;width:1px;height:22px;background:#e1e1e1"></b><b class="r" style="left:1094px;top:375px;width:1px;height:22px;background:#e1e1e1"></b><b class="r" style="left:1143px;top:375px;width:1px;height:22px;background:#e1e1e1"></b><b class="r" style="left:1188px;top:375px;width:1px;height:22px;background:#e1e1e1"></b><b class="r" style="left:1226px;top:375px;width:1px;height:22px;background:#e1e1e1"></b><b class="r" style="left:1267px;top:375px;width:1px;height:22px;background:#e1e1e1"></b><b class="r" style="left:45px;top:375px;width:1px;height:23px;background:#e1e1e1"></b><b class="r" style="left:117px;top:374px;width:43px;height:24px;background:#eb8671"></b><b class="r" style="left:775px;top:374px;width:214px;height:24px;background:#f9cb9c"></b><i class="t" style="left:51.45px;top:380px;font-size:13.4px;color:#000;transform:scaleX(0.9594);">10 Feb 26</i><i class="t" style="left:123.13px;top:380px;font-size:13.4px;color:#000;transform:scaleX(0.9975);">2310</i><i class="t" style="left:174.23px;top:380px;font-size:13.4px;color:#000;transform:scaleX(0.9583);">-2.2%</i><i class="t" style="left:230.25px;top:380px;font-size:13.4px;color:#000;">-4.72</i><i class="t" style="left:274.04px;top:380px;font-size:13.4px;color:#000;">-14.09</i><i class="t" style="left:321.00px;top:380px;font-size:13.4px;color:#000;transform:scaleX(0.8706);">STRONG BEARISH</i><svg class="ic" style="left:468.00px;top:377.00px" width="18" height="18" viewBox="0 0 18 18"><circle cx="9" cy="9" r="7.4" fill="#fff100" stroke="#8f8a12" stroke-width="1.3"/></svg><i class="t" style="left:490.00px;top:380px;font-size:13.4px;color:#000;transform:scaleX(0.8940);">PROFIT TAKING</i><svg class="ic" style="left:619.00px;top:377.00px" width="18" height="18" viewBox="0 0 18 18"><circle cx="8.8" cy="5.4" r="4.7" fill="url(#rc)"/><circle cx="5.2" cy="11.3" r="4.7" fill="url(#rc)"/><circle cx="12.4" cy="11.5" r="4.7" fill="url(#rc)"/><circle cx="8.8" cy="9.5" r="2.7" fill="#053605"/><path d="M6.2 1 H11.4" stroke="#042804" stroke-width="1.3"/></svg><i class="t" style="left:640.20px;top:380px;font-size:13.4px;color:#000;transform:scaleX(0.8945);">TECHNICAL REBOUND</i><svg class="ic" style="left:780.00px;top:377.00px" width="18" height="18" viewBox="0 0 18 18"><path d="M9 1.6 L16.6 15.6 H1.4 Z" fill="#f3e81c" stroke="#6f6714" stroke-width="1.4" stroke-linejoin="round"/><path d="M9 6.2 V11" stroke="#6f6714" stroke-width="1.7" stroke-linecap="round"/><circle cx="9" cy="13.3" r="1" fill="#6f6714"/></svg><i class="t" style="left:802.00px;top:380px;font-size:13.4px;color:#5c4a2c;transform:scaleX(0.8887);">PRICE UP (PROFIT TAKING)</i><i class="t" style="left:1014.78px;top:380px;font-size:13.4px;color:#000;transform:scaleX(0.9975);">3</i><i class="t" style="left:1056.25px;top:380px;font-size:13.4px;color:#000;">-9.62</i><i class="t" style="left:1100.04px;top:380px;font-size:13.4px;color:#000;">-28.71</i><i class="t" style="left:1153.00px;top:380px;font-size:13.4px;color:#000;transform:scaleX(0.9971);">0.01</i><i class="t" style="left:1192.25px;top:380px;font-size:13.4px;color:#000;">-0.49</i><i class="t" style="left:1238.65px;top:380px;font-size:13.4px;color:#000;transform:scaleX(0.9453);">20%</i><i class="t" style="left:1271.00px;top:380px;font-size:13.4px;color:#000;transform:scaleX(1.0062);">-</i><b class="r" style="left:0px;top:397px;width:4px;height:1px;background:#4a4a4a"></b><i class="t" style="left:16.40px;top:403px;font-size:10.6px;color:#5f6368;">12</i><b class="r" style="left:0px;top:420px;width:1354px;height:1px;background:#e1e1e1"></b><b class="r" style="left:159px;top:398px;width:1px;height:22px;background:#e1e1e1"></b><b class="r" style="left:222px;top:398px;width:1px;height:22px;background:#e1e1e1"></b><b class="r" style="left:268px;top:398px;width:1px;height:22px;background:#e1e1e1"></b><b class="r" style="left:317px;top:398px;width:1px;height:22px;background:#e1e1e1"></b><b class="r" style="left:463px;top:398px;width:1px;height:22px;background:#e1e1e1"></b><b class="r" style="left:614px;top:398px;width:1px;height:22px;background:#e1e1e1"></b><b class="r" style="left:775px;top:398px;width:1px;height:22px;background:#e1e1e1"></b><b class="r" style="left:988px;top:398px;width:1px;height:22px;background:#e1e1e1"></b><b class="r" style="left:1048px;top:398px;width:1px;height:22px;background:#e1e1e1"></b><b class="r" style="left:1094px;top:398px;width:1px;height:22px;background:#e1e1e1"></b><b class="r" style="left:1143px;top:398px;width:1px;height:22px;background:#e1e1e1"></b><b class="r" style="left:1188px;top:398px;width:1px;height:22px;background:#e1e1e1"></b><b class="r" style="left:1226px;top:398px;width:1px;height:22px;background:#e1e1e1"></b><b class="r" style="left:1267px;top:398px;width:1px;height:22px;background:#e1e1e1"></b><b class="r" style="left:45px;top:398px;width:1px;height:23px;background:#e1e1e1"></b><b class="r" style="left:117px;top:397px;width:43px;height:24px;background:#e98172"></b><b class="r" style="left:775px;top:397px;width:214px;height:24px;background:#f9bf04"></b><b class="r" style="left:1094px;top:397px;width:50px;height:24px;background:#b7e1cd"></b><b class="r" style="left:1188px;top:397px;width:39px;height:24px;background:#f2bcb7"></b><i class="t" style="left:51.45px;top:403px;font-size:13.4px;color:#000;transform:scaleX(0.9594);">09 Feb 26</i><i class="t" style="left:123.13px;top:403px;font-size:13.4px;color:#000;transform:scaleX(0.9975);">2250</i><i class="t" style="left:174.23px;top:403px;font-size:13.4px;color:#000;transform:scaleX(0.9583);">-6.6%</i><i class="t" style="left:232.50px;top:403px;font-size:13.4px;color:#000;transform:scaleX(0.9971);">0.24</i><i class="t" style="left:280.00px;top:403px;font-size:13.4px;color:#000;transform:scaleX(0.9971);">4.69</i><i class="t" style="left:321.00px;top:403px;font-size:13.4px;color:#000;transform:scaleX(0.8706);">STRONG BEARISH</i><svg class="ic" style="left:468.00px;top:400.00px" width="18" height="18" viewBox="0 0 18 18"><circle cx="9" cy="9" r="7.4" fill="#16c60c" stroke="#0c3f0a" stroke-width="1.3"/></svg><i class="t" style="left:490.00px;top:403px;font-size:13.4px;color:#000;transform:scaleX(0.8754);">PURE FOREIGN</i><svg class="ic" style="left:619.00px;top:400.00px" width="18" height="18" viewBox="0 0 18 18"><circle cx="8.8" cy="5.4" r="4.7" fill="url(#rc)"/><circle cx="5.2" cy="11.3" r="4.7" fill="url(#rc)"/><circle cx="12.4" cy="11.5" r="4.7" fill="url(#rc)"/><circle cx="8.8" cy="9.5" r="2.7" fill="#053605"/><path d="M6.2 1 H11.4" stroke="#042804" stroke-width="1.3"/></svg><i class="t" style="left:640.20px;top:403px;font-size:13.4px;color:#000;transform:scaleX(0.8945);">TECHNICAL REBOUND</i><svg class="ic" style="left:780.00px;top:400.00px" width="18" height="18" viewBox="0 0 18 18"><path d="M6 1.6 H11.4 L10.6 5 C14.4 6.8 15.4 10.6 14.6 13.4 C13.8 16 11.6 17 8.6 17 C5.6 17 3.4 16 2.6 13.4 C1.8 10.6 2.8 6.8 6.8 5 Z" fill="#ddd525" stroke="#7f7208" stroke-width="1.4" stroke-linejoin="round"/><path d="M8.7 8.2 V14.6 M10.4 9.6 C9.6 8.8 7.2 8.8 7.2 10.2 C7.2 11.6 10.4 11.2 10.4 12.8 C10.4 14 8 14.2 7 13.2" stroke="#7f7208" stroke-width="0.9" fill="none"/></svg><i class="t" style="left:799.60px;top:403px;font-size:13.4px;color:#7f7a00;transform:scaleX(0.8671);">SELL ON STRENGTH (SOS)</i><i class="t" style="left:1014.78px;top:403px;font-size:13.4px;color:#000;transform:scaleX(0.9975);">6</i><i class="t" style="left:1058.50px;top:403px;font-size:13.4px;color:#000;transform:scaleX(0.9971);">0.50</i><i class="t" style="left:1106.00px;top:403px;font-size:13.4px;color:#000;transform:scaleX(0.9971);">9.81</i><i class="t" style="left:1153.00px;top:403px;font-size:13.4px;color:#000;transform:scaleX(0.9971);">0.52</i><i class="t" style="left:1192.25px;top:403px;font-size:13.4px;color:#000;">-0.99</i><i class="t" style="left:1246.08px;top:403px;font-size:13.4px;color:#000;transform:scaleX(0.9252);">8%</i><i class="t" style="left:1271.00px;top:403px;font-size:13.4px;color:#000;transform:scaleX(1.0190);">Doji (Neutral)</i><b class="r" style="left:0px;top:420px;width:4px;height:1px;background:#4a4a4a"></b><i class="t" style="left:16.40px;top:426px;font-size:10.6px;color:#5f6368;">13</i><b class="r" style="left:0px;top:443px;width:1354px;height:1px;background:#e1e1e1"></b><b class="r" style="left:159px;top:421px;width:1px;height:22px;background:#e1e1e1"></b><b class="r" style="left:222px;top:421px;width:1px;height:22px;background:#e1e1e1"></b><b class="r" style="left:268px;top:421px;width:1px;height:22px;background:#e1e1e1"></b><b class="r" style="left:317px;top:421px;width:1px;height:22px;background:#e1e1e1"></b><b class="r" style="left:463px;top:421px;width:1px;height:22px;background:#e1e1e1"></b><b class="r" style="left:614px;top:421px;width:1px;height:22px;background:#e1e1e1"></b><b class="r" style="left:775px;top:421px;width:1px;height:22px;background:#e1e1e1"></b><b class="r" style="left:988px;top:421px;width:1px;height:22px;background:#e1e1e1"></b><b class="r" style="left:1048px;top:421px;width:1px;height:22px;background:#e1e1e1"></b><b class="r" style="left:1094px;top:421px;width:1px;height:22px;background:#e1e1e1"></b><b class="r" style="left:1143px;top:421px;width:1px;height:22px;background:#e1e1e1"></b><b class="r" style="left:1188px;top:421px;width:1px;height:22px;background:#e1e1e1"></b><b class="r" style="left:1226px;top:421px;width:1px;height:22px;background:#e1e1e1"></b><b class="r" style="left:1267px;top:421px;width:1px;height:22px;background:#e1e1e1"></b><b class="r" style="left:45px;top:421px;width:1px;height:23px;background:#e1e1e1"></b><b class="r" style="left:117px;top:420px;width:43px;height:24px;background:#e77c73"></b><b class="r" style="left:775px;top:420px;width:214px;height:24px;background:#cc0000"></b><b class="r" style="left:1267px;top:420px;width:88px;height:24px;background:#cc0000"></b><i class="t" style="left:51.45px;top:426px;font-size:13.4px;color:#000;transform:scaleX(0.9594);">06 Feb 26</i><i class="t" style="left:123.13px;top:426px;font-size:13.4px;color:#000;transform:scaleX(0.9975);">2200</i><i class="t" style="left:170.51px;top:426px;font-size:13.4px;color:#000;transform:scaleX(0.9652);">-10.6%</i><i class="t" style="left:226.54px;top:426px;font-size:13.4px;color:#000;">-12.29</i><i class="t" style="left:277.75px;top:426px;font-size:13.4px;color:#000;">-3.56</i><i class="t" style="left:321.00px;top:426px;font-size:13.4px;color:#000;transform:scaleX(0.8706);">STRONG BEARISH</i><svg class="ic" style="left:468.00px;top:423.00px" width="18" height="18" viewBox="0 0 18 18"><circle cx="9" cy="9" r="7.4" fill="#fff100" stroke="#8f8a12" stroke-width="1.3"/></svg><i class="t" style="left:490.00px;top:426px;font-size:13.4px;color:#000;transform:scaleX(0.9446);">NORMAL OUT</i><svg class="ic" style="left:619.00px;top:423.00px" width="18" height="18" viewBox="0 0 18 18"><path d="M12.8 5.2 L15.4 2.6" stroke="#23232b" stroke-width="2.2" stroke-linecap="round"/><circle cx="15.9" cy="2.2" r="1.5" fill="#f0f0f4" stroke="#23232b" stroke-width="1.1"/><path d="M.9 4.8 H14 L12.6 12.3 H2.5 Z" fill="#a9a9b6" stroke="#23232b" stroke-width="1.3" stroke-linejoin="round"/><path d="M1.6 7.3 H13.4 M2.2 9.8 H12.9 M4.5 5 L5 12 M7.5 5 V12 M10.6 5 L10.1 12" stroke="#3c3c48" stroke-width=".75"/><path d="M2.5 12.3 L2.1 14 H13 L12.6 12.3" fill="#62626e" stroke="#23232b" stroke-width="1" stroke-linejoin="round"/><circle cx="5" cy="15.5" r="1.6" fill="#f4f4f7" stroke="#23232b" stroke-width="1.1"/><circle cx="10.9" cy="15.5" r="1.6" fill="#f4f4f7" stroke="#23232b" stroke-width="1.1"/></svg><i class="t" style="left:641.00px;top:426px;font-size:13.4px;color:#000;transform:scaleX(0.9221);">PANIC BOTTOM</i><svg class="ic" style="left:780.00px;top:423.00px" width="18" height="18" viewBox="0 0 18 18"><circle cx="9" cy="9" r="7.3" fill="#f03a17" stroke="#8b0a0a" stroke-width="1.3"/><rect x="3.6" y="7.3" width="10.8" height="3.4" rx="0.6" fill="#fff"/></svg><i class="t" style="left:802.00px;top:426px;font-size:13.4px;color:#ffffff;transform:scaleX(0.9291);">AVOID DOWNTREND</i><i class="t" style="left:1014.78px;top:426px;font-size:13.4px;color:#000;transform:scaleX(0.9975);">2</i><i class="t" style="left:1052.54px;top:426px;font-size:13.4px;color:#000;">-26.30</i><i class="t" style="left:1103.75px;top:426px;font-size:13.4px;color:#000;">-7.62</i><i class="t" style="left:1150.75px;top:426px;font-size:13.4px;color:#000;">-0.72</i><i class="t" style="left:1192.25px;top:426px;font-size:13.4px;color:#000;">-0.45</i><i class="t" style="left:1238.65px;top:426px;font-size:13.4px;color:#000;transform:scaleX(0.9453);">40%</i><i class="t" style="left:1271.00px;top:426px;font-size:13.4px;color:#fff;transform:scaleX(0.9553);">3 BlkCrows (St</i><b class="r" style="left:0px;top:443px;width:4px;height:1px;background:#4a4a4a"></b><i class="t" style="left:16.40px;top:449px;font-size:10.6px;color:#5f6368;">14</i><b class="r" style="left:0px;top:466px;width:1354px;height:1px;background:#e1e1e1"></b><b class="r" style="left:159px;top:444px;width:1px;height:22px;background:#e1e1e1"></b><b class="r" style="left:222px;top:444px;width:1px;height:22px;background:#e1e1e1"></b><b class="r" style="left:268px;top:444px;width:1px;height:22px;background:#e1e1e1"></b><b class="r" style="left:317px;top:444px;width:1px;height:22px;background:#e1e1e1"></b><b class="r" style="left:463px;top:444px;width:1px;height:22px;background:#e1e1e1"></b><b class="r" style="left:614px;top:444px;width:1px;height:22px;background:#e1e1e1"></b><b class="r" style="left:775px;top:444px;width:1px;height:22px;background:#e1e1e1"></b><b class="r" style="left:988px;top:444px;width:1px;height:22px;background:#e1e1e1"></b><b class="r" style="left:1048px;top:444px;width:1px;height:22px;background:#e1e1e1"></b><b class="r" style="left:1094px;top:444px;width:1px;height:22px;background:#e1e1e1"></b><b class="r" style="left:1143px;top:444px;width:1px;height:22px;background:#e1e1e1"></b><b class="r" style="left:1188px;top:444px;width:1px;height:22px;background:#e1e1e1"></b><b class="r" style="left:1226px;top:444px;width:1px;height:22px;background:#e1e1e1"></b><b class="r" style="left:1267px;top:444px;width:1px;height:22px;background:#e1e1e1"></b><b class="r" style="left:45px;top:444px;width:1px;height:23px;background:#e1e1e1"></b><b class="r" style="left:117px;top:443px;width:43px;height:24px;background:#ec8871"></b><b class="r" style="left:775px;top:443px;width:214px;height:24px;background:#f9bf04"></b><b class="r" style="left:1188px;top:443px;width:39px;height:24px;background:#e67c73"></b><i class="t" style="left:51.45px;top:449px;font-size:13.4px;color:#000;transform:scaleX(0.9594);">05 Feb 26</i><i class="t" style="left:123.13px;top:449px;font-size:13.4px;color:#000;transform:scaleX(0.9975);">2330</i><i class="t" style="left:174.23px;top:449px;font-size:13.4px;color:#000;transform:scaleX(0.9583);">-8.1%</i><i class="t" style="left:230.25px;top:449px;font-size:13.4px;color:#000;">-0.96</i><i class="t" style="left:277.75px;top:449px;font-size:13.4px;color:#000;">-6.48</i><i class="t" style="left:321.00px;top:449px;font-size:13.4px;color:#000;transform:scaleX(0.8706);">STRONG BEARISH</i><svg class="ic" style="left:468.00px;top:446.00px" width="18" height="18" viewBox="0 0 18 18"><circle cx="9" cy="9" r="7.4" fill="#fff100" stroke="#8f8a12" stroke-width="1.3"/></svg><i class="t" style="left:490.00px;top:449px;font-size:13.4px;color:#000;transform:scaleX(0.9446);">NORMAL OUT</i><svg class="ic" style="left:619.00px;top:446.00px" width="18" height="18" viewBox="0 0 18 18"><circle cx="8.8" cy="5.4" r="4.7" fill="url(#rc)"/><circle cx="5.2" cy="11.3" r="4.7" fill="url(#rc)"/><circle cx="12.4" cy="11.5" r="4.7" fill="url(#rc)"/><circle cx="8.8" cy="9.5" r="2.7" fill="#053605"/><path d="M6.2 1 H11.4" stroke="#042804" stroke-width="1.3"/></svg><i class="t" style="left:640.20px;top:449px;font-size:13.4px;color:#000;transform:scaleX(0.8945);">TECHNICAL REBOUND</i><svg class="ic" style="left:780.00px;top:446.00px" width="18" height="18" viewBox="0 0 18 18"><path d="M6 1.6 H11.4 L10.6 5 C14.4 6.8 15.4 10.6 14.6 13.4 C13.8 16 11.6 17 8.6 17 C5.6 17 3.4 16 2.6 13.4 C1.8 10.6 2.8 6.8 6.8 5 Z" fill="#ddd525" stroke="#7f7208" stroke-width="1.4" stroke-linejoin="round"/><path d="M8.7 8.2 V14.6 M10.4 9.6 C9.6 8.8 7.2 8.8 7.2 10.2 C7.2 11.6 10.4 11.2 10.4 12.8 C10.4 14 8 14.2 7 13.2" stroke="#7f7208" stroke-width="0.9" fill="none"/></svg><i class="t" style="left:799.60px;top:449px;font-size:13.4px;color:#7f7a00;transform:scaleX(0.8671);">SELL ON STRENGTH (SOS)</i><i class="t" style="left:1014.78px;top:449px;font-size:13.4px;color:#000;transform:scaleX(0.9975);">9</i><i class="t" style="left:1056.25px;top:449px;font-size:13.4px;color:#000;">-1.94</i><i class="t" style="left:1100.04px;top:449px;font-size:13.4px;color:#000;">-13.09</i><i class="t" style="left:1153.00px;top:449px;font-size:13.4px;color:#000;transform:scaleX(0.9971);">0.33</i><i class="t" style="left:1192.25px;top:449px;font-size:13.4px;color:#000;">-1.55</i><i class="t" style="left:1246.08px;top:449px;font-size:13.4px;color:#000;transform:scaleX(0.9252);">0%</i><i class="t" style="left:1271.00px;top:449px;font-size:13.4px;color:#000;transform:scaleX(1.0062);">-</i><b class="r" style="left:0px;top:466px;width:4px;height:1px;background:#4a4a4a"></b><i class="t" style="left:16.40px;top:472px;font-size:10.6px;color:#5f6368;">15</i><b class="r" style="left:0px;top:489px;width:1354px;height:1px;background:#e1e1e1"></b><b class="r" style="left:159px;top:467px;width:1px;height:22px;background:#e1e1e1"></b><b class="r" style="left:222px;top:467px;width:1px;height:22px;background:#e1e1e1"></b><b class="r" style="left:268px;top:467px;width:1px;height:22px;background:#e1e1e1"></b><b class="r" style="left:317px;top:467px;width:1px;height:22px;background:#e1e1e1"></b><b class="r" style="left:463px;top:467px;width:1px;height:22px;background:#e1e1e1"></b><b class="r" style="left:614px;top:467px;width:1px;height:22px;background:#e1e1e1"></b><b class="r" style="left:775px;top:467px;width:1px;height:22px;background:#e1e1e1"></b><b class="r" style="left:988px;top:467px;width:1px;height:22px;background:#e1e1e1"></b><b class="r" style="left:1048px;top:467px;width:1px;height:22px;background:#e1e1e1"></b><b class="r" style="left:1094px;top:467px;width:1px;height:22px;background:#e1e1e1"></b><b class="r" style="left:1143px;top:467px;width:1px;height:22px;background:#e1e1e1"></b><b class="r" style="left:1188px;top:467px;width:1px;height:22px;background:#e1e1e1"></b><b class="r" style="left:1226px;top:467px;width:1px;height:22px;background:#e1e1e1"></b><b class="r" style="left:1267px;top:467px;width:1px;height:22px;background:#e1e1e1"></b><b class="r" style="left:45px;top:467px;width:1px;height:23px;background:#e1e1e1"></b><b class="r" style="left:117px;top:466px;width:43px;height:24px;background:#ec8971"></b><b class="r" style="left:775px;top:466px;width:214px;height:24px;background:#f9bf04"></b><b class="r" style="left:1188px;top:466px;width:39px;height:24px;background:#e98a82"></b><i class="t" style="left:51.45px;top:472px;font-size:13.4px;color:#000;transform:scaleX(0.9594);">04 Feb 26</i><i class="t" style="left:123.13px;top:472px;font-size:13.4px;color:#000;transform:scaleX(0.9975);">2340</i><i class="t" style="left:174.23px;top:472px;font-size:13.4px;color:#000;transform:scaleX(0.9583);">-9.6%</i><i class="t" style="left:230.25px;top:472px;font-size:13.4px;color:#000;">-2.69</i><i class="t" style="left:274.04px;top:472px;font-size:13.4px;color:#000;">-21.81</i><i class="t" style="left:321.00px;top:472px;font-size:13.4px;color:#000;transform:scaleX(0.8706);">STRONG BEARISH</i><svg class="ic" style="left:468.00px;top:469.00px" width="18" height="18" viewBox="0 0 18 18"><circle cx="9" cy="9" r="7.4" fill="#fff100" stroke="#8f8a12" stroke-width="1.3"/></svg><i class="t" style="left:490.00px;top:472px;font-size:13.4px;color:#000;transform:scaleX(0.9446);">NORMAL OUT</i><svg class="ic" style="left:619.00px;top:469.00px" width="18" height="18" viewBox="0 0 18 18"><circle cx="8.8" cy="5.4" r="4.7" fill="url(#rc)"/><circle cx="5.2" cy="11.3" r="4.7" fill="url(#rc)"/><circle cx="12.4" cy="11.5" r="4.7" fill="url(#rc)"/><circle cx="8.8" cy="9.5" r="2.7" fill="#053605"/><path d="M6.2 1 H11.4" stroke="#042804" stroke-width="1.3"/></svg><i class="t" style="left:640.20px;top:472px;font-size:13.4px;color:#000;transform:scaleX(0.8945);">TECHNICAL REBOUND</i><svg class="ic" style="left:780.00px;top:469.00px" width="18" height="18" viewBox="0 0 18 18"><path d="M6 1.6 H11.4 L10.6 5 C14.4 6.8 15.4 10.6 14.6 13.4 C13.8 16 11.6 17 8.6 17 C5.6 17 3.4 16 2.6 13.4 C1.8 10.6 2.8 6.8 6.8 5 Z" fill="#ddd525" stroke="#7f7208" stroke-width="1.4" stroke-linejoin="round"/><path d="M8.7 8.2 V14.6 M10.4 9.6 C9.6 8.8 7.2 8.8 7.2 10.2 C7.2 11.6 10.4 11.2 10.4 12.8 C10.4 14 8 14.2 7 13.2" stroke="#7f7208" stroke-width="0.9" fill="none"/></svg><i class="t" style="left:799.60px;top:472px;font-size:13.4px;color:#7f7a00;transform:scaleX(0.8671);">SELL ON STRENGTH (SOS)</i><i class="t" style="left:1014.78px;top:472px;font-size:13.4px;color:#000;transform:scaleX(0.9975);">3</i><i class="t" style="left:1056.25px;top:472px;font-size:13.4px;color:#000;">-5.41</i><i class="t" style="left:1100.04px;top:472px;font-size:13.4px;color:#000;">-43.87</i><i class="t" style="left:1153.00px;top:472px;font-size:13.4px;color:#000;transform:scaleX(0.9971);">0.24</i><i class="t" style="left:1192.25px;top:472px;font-size:13.4px;color:#000;">-1.43</i><i class="t" style="left:1238.65px;top:472px;font-size:13.4px;color:#000;transform:scaleX(0.9453);">36%</i><i class="t" style="left:1271.00px;top:472px;font-size:13.4px;color:#000;transform:scaleX(1.0062);">-</i><b class="r" style="left:0px;top:489px;width:4px;height:1px;background:#4a4a4a"></b><i class="t" style="left:16.40px;top:495px;font-size:10.6px;color:#5f6368;">16</i><b class="r" style="left:0px;top:512px;width:1354px;height:1px;background:#e1e1e1"></b><b class="r" style="left:159px;top:490px;width:1px;height:22px;background:#e1e1e1"></b><b class="r" style="left:222px;top:490px;width:1px;height:22px;background:#e1e1e1"></b><b class="r" style="left:268px;top:490px;width:1px;height:22px;background:#e1e1e1"></b><b class="r" style="left:317px;top:490px;width:1px;height:22px;background:#e1e1e1"></b><b class="r" style="left:463px;top:490px;width:1px;height:22px;background:#e1e1e1"></b><b class="r" style="left:614px;top:490px;width:1px;height:22px;background:#e1e1e1"></b><b class="r" style="left:775px;top:490px;width:1px;height:22px;background:#e1e1e1"></b><b class="r" style="left:988px;top:490px;width:1px;height:22px;background:#e1e1e1"></b><b class="r" style="left:1048px;top:490px;width:1px;height:22px;background:#e1e1e1"></b><b class="r" style="left:1094px;top:490px;width:1px;height:22px;background:#e1e1e1"></b><b class="r" style="left:1143px;top:490px;width:1px;height:22px;background:#e1e1e1"></b><b class="r" style="left:1188px;top:490px;width:1px;height:22px;background:#e1e1e1"></b><b class="r" style="left:1226px;top:490px;width:1px;height:22px;background:#e1e1e1"></b><b class="r" style="left:1267px;top:490px;width:1px;height:22px;background:#e1e1e1"></b><b class="r" style="left:45px;top:490px;width:1px;height:23px;background:#e1e1e1"></b><b class="r" style="left:117px;top:489px;width:43px;height:24px;background:#ee906f"></b><b class="r" style="left:775px;top:489px;width:214px;height:24px;background:#cc0000"></b><b class="r" style="left:1143px;top:489px;width:46px;height:24px;background:#e06666"></b><i class="t" style="left:51.45px;top:495px;font-size:13.4px;color:#000;transform:scaleX(0.9594);">03 Feb 26</i><i class="t" style="left:123.13px;top:495px;font-size:13.4px;color:#000;transform:scaleX(0.9975);">2390</i><i class="t" style="left:174.23px;top:495px;font-size:13.4px;color:#000;transform:scaleX(0.9583);">-9.9%</i><i class="t" style="left:226.54px;top:495px;font-size:13.4px;color:#000;">-22.36</i><i class="t" style="left:274.04px;top:495px;font-size:13.4px;color:#000;">-23.19</i><i class="t" style="left:321.00px;top:495px;font-size:13.4px;color:#000;transform:scaleX(0.8670);">BEARISH</i><svg class="ic" style="left:468.00px;top:492.00px" width="18" height="18" viewBox="0 0 18 18"><circle cx="9" cy="9" r="7.4" fill="#e81224" stroke="#7c0a14" stroke-width="1.3"/></svg><i class="t" style="left:490.00px;top:495px;font-size:13.4px;color:#000;transform:scaleX(0.9092);">MASSIVE OUT</i><svg class="ic" style="left:619.00px;top:492.00px" width="18" height="18" viewBox="0 0 18 18"><circle cx="8.8" cy="5.4" r="4.7" fill="url(#rc)"/><circle cx="5.2" cy="11.3" r="4.7" fill="url(#rc)"/><circle cx="12.4" cy="11.5" r="4.7" fill="url(#rc)"/><circle cx="8.8" cy="9.5" r="2.7" fill="#053605"/><path d="M6.2 1 H11.4" stroke="#042804" stroke-width="1.3"/></svg><i class="t" style="left:640.20px;top:495px;font-size:13.4px;color:#000;transform:scaleX(0.8945);">TECHNICAL REBOUND</i><svg class="ic" style="left:780.00px;top:492.00px" width="18" height="18" viewBox="0 0 18 18"><circle cx="9" cy="9" r="7.3" fill="#f03a17" stroke="#8b0a0a" stroke-width="1.3"/><rect x="3.6" y="7.3" width="10.8" height="3.4" rx="0.6" fill="#fff"/></svg><i class="t" style="left:802.00px;top:495px;font-size:13.4px;color:#ffffff;transform:scaleX(0.8889);">MASSIVE DISTRIB (EXIT)</i><i class="t" style="left:1014.78px;top:495px;font-size:13.4px;color:#000;transform:scaleX(0.9975);">4</i><i class="t" style="left:1052.54px;top:495px;font-size:13.4px;color:#000;">-44.04</i><i class="t" style="left:1100.04px;top:495px;font-size:13.4px;color:#000;">-45.67</i><i class="t" style="left:1150.75px;top:495px;font-size:13.4px;color:#000;">-1.55</i><i class="t" style="left:1192.25px;top:495px;font-size:13.4px;color:#000;">-0.29</i><i class="t" style="left:1238.65px;top:495px;font-size:13.4px;color:#000;transform:scaleX(0.9453);">80%</i><i class="t" style="left:1271.00px;top:495px;font-size:13.4px;color:#000;transform:scaleX(1.0062);">-</i><b class="r" style="left:0px;top:512px;width:4px;height:1px;background:#4a4a4a"></b><i class="t" style="left:16.40px;top:518px;font-size:10.6px;color:#5f6368;">17</i><b class="r" style="left:0px;top:535px;width:1354px;height:1px;background:#e1e1e1"></b><b class="r" style="left:159px;top:513px;width:1px;height:22px;background:#e1e1e1"></b><b class="r" style="left:222px;top:513px;width:1px;height:22px;background:#e1e1e1"></b><b class="r" style="left:268px;top:513px;width:1px;height:22px;background:#e1e1e1"></b><b class="r" style="left:317px;top:513px;width:1px;height:22px;background:#e1e1e1"></b><b class="r" style="left:463px;top:513px;width:1px;height:22px;background:#e1e1e1"></b><b class="r" style="left:614px;top:513px;width:1px;height:22px;background:#e1e1e1"></b><b class="r" style="left:775px;top:513px;width:1px;height:22px;background:#e1e1e1"></b><b class="r" style="left:988px;top:513px;width:1px;height:22px;background:#e1e1e1"></b><b class="r" style="left:1048px;top:513px;width:1px;height:22px;background:#e1e1e1"></b><b class="r" style="left:1094px;top:513px;width:1px;height:22px;background:#e1e1e1"></b><b class="r" style="left:1143px;top:513px;width:1px;height:22px;background:#e1e1e1"></b><b class="r" style="left:1188px;top:513px;width:1px;height:22px;background:#e1e1e1"></b><b class="r" style="left:1226px;top:513px;width:1px;height:22px;background:#e1e1e1"></b><b class="r" style="left:1267px;top:513px;width:1px;height:22px;background:#e1e1e1"></b><b class="r" style="left:45px;top:513px;width:1px;height:23px;background:#e1e1e1"></b><b class="r" style="left:117px;top:512px;width:43px;height:24px;background:#e98272"></b><b class="r" style="left:775px;top:512px;width:214px;height:24px;background:#cc0000"></b><b class="r" style="left:1094px;top:512px;width:50px;height:24px;background:#b7e1cd"></b><b class="r" style="left:1188px;top:512px;width:39px;height:24px;background:#f1f9f5"></b><i class="t" style="left:51.45px;top:518px;font-size:13.4px;color:#000;transform:scaleX(0.9594);">02 Feb 26</i><i class="t" style="left:123.13px;top:518px;font-size:13.4px;color:#000;transform:scaleX(0.9975);">2260</i><i class="t" style="left:170.51px;top:518px;font-size:13.4px;color:#000;transform:scaleX(0.9652);">-17.0%</i><i class="t" style="left:230.25px;top:518px;font-size:13.4px;color:#000;">-2.67</i><i class="t" style="left:276.28px;top:518px;font-size:13.4px;color:#000;transform:scaleX(0.9972);">30.38</i><i class="t" style="left:321.00px;top:518px;font-size:13.4px;color:#000;transform:scaleX(0.8835);">DANGER: FF TRAP</i><svg class="ic" style="left:468.00px;top:515.00px" width="18" height="18" viewBox="0 0 18 18"><path d="M9 1.6 L16.6 15.6 H1.4 Z" fill="#f3e81c" stroke="#6f6714" stroke-width="1.4" stroke-linejoin="round"/><path d="M9 6.2 V11" stroke="#6f6714" stroke-width="1.7" stroke-linecap="round"/><circle cx="9" cy="13.3" r="1" fill="#6f6714"/></svg><i class="t" style="left:490.00px;top:518px;font-size:13.4px;color:#000;transform:scaleX(0.8779);">DISTRIB (FF TRAP)</i><svg class="ic" style="left:619.00px;top:515.00px" width="18" height="18" viewBox="0 0 18 18"><path d="M12.8 5.2 L15.4 2.6" stroke="#23232b" stroke-width="2.2" stroke-linecap="round"/><circle cx="15.9" cy="2.2" r="1.5" fill="#f0f0f4" stroke="#23232b" stroke-width="1.1"/><path d="M.9 4.8 H14 L12.6 12.3 H2.5 Z" fill="#a9a9b6" stroke="#23232b" stroke-width="1.3" stroke-linejoin="round"/><path d="M1.6 7.3 H13.4 M2.2 9.8 H12.9 M4.5 5 L5 12 M7.5 5 V12 M10.6 5 L10.1 12" stroke="#3c3c48" stroke-width=".75"/><path d="M2.5 12.3 L2.1 14 H13 L12.6 12.3" fill="#62626e" stroke="#23232b" stroke-width="1" stroke-linejoin="round"/><circle cx="5" cy="15.5" r="1.6" fill="#f4f4f7" stroke="#23232b" stroke-width="1.1"/><circle cx="10.9" cy="15.5" r="1.6" fill="#f4f4f7" stroke="#23232b" stroke-width="1.1"/></svg><i class="t" style="left:641.00px;top:518px;font-size:13.4px;color:#000;transform:scaleX(0.9221);">PANIC BOTTOM</i><svg class="ic" style="left:780.00px;top:515.00px" width="18" height="18" viewBox="0 0 18 18"><circle cx="9" cy="9" r="7.3" fill="#f03a17" stroke="#8b0a0a" stroke-width="1.3"/><rect x="3.6" y="7.3" width="10.8" height="3.4" rx="0.6" fill="#fff"/></svg><i class="t" style="left:802.00px;top:518px;font-size:13.4px;color:#ffffff;transform:scaleX(0.8700);">TRAP DETECTED (EXIT)</i><i class="t" style="left:1014.78px;top:518px;font-size:13.4px;color:#000;transform:scaleX(0.9975);">2</i><i class="t" style="left:1056.25px;top:518px;font-size:13.4px;color:#000;">-5.56</i><i class="t" style="left:1102.28px;top:518px;font-size:13.4px;color:#000;transform:scaleX(0.9972);">63.27</i><i class="t" style="left:1153.00px;top:518px;font-size:13.4px;color:#000;transform:scaleX(0.9971);">0.20</i><i class="t" style="left:1194.50px;top:518px;font-size:13.4px;color:#000;transform:scaleX(0.9971);">0.19</i><i class="t" style="left:1238.65px;top:518px;font-size:13.4px;color:#000;transform:scaleX(0.9453);">92%</i><i class="t" style="left:1271.00px;top:518px;font-size:13.4px;color:#000;transform:scaleX(1.0062);">-</i><b class="r" style="left:0px;top:535px;width:4px;height:1px;background:#4a4a4a"></b><i class="t" style="left:16.40px;top:541px;font-size:10.6px;color:#5f6368;">18</i><b class="r" style="left:0px;top:558px;width:1354px;height:1px;background:#e1e1e1"></b><b class="r" style="left:159px;top:536px;width:1px;height:22px;background:#e1e1e1"></b><b class="r" style="left:222px;top:536px;width:1px;height:22px;background:#e1e1e1"></b><b class="r" style="left:268px;top:536px;width:1px;height:22px;background:#e1e1e1"></b><b class="r" style="left:317px;top:536px;width:1px;height:22px;background:#e1e1e1"></b><b class="r" style="left:463px;top:536px;width:1px;height:22px;background:#e1e1e1"></b><b class="r" style="left:614px;top:536px;width:1px;height:22px;background:#e1e1e1"></b><b class="r" style="left:775px;top:536px;width:1px;height:22px;background:#e1e1e1"></b><b class="r" style="left:988px;top:536px;width:1px;height:22px;background:#e1e1e1"></b><b class="r" style="left:1048px;top:536px;width:1px;height:22px;background:#e1e1e1"></b><b class="r" style="left:1094px;top:536px;width:1px;height:22px;background:#e1e1e1"></b><b class="r" style="left:1143px;top:536px;width:1px;height:22px;background:#e1e1e1"></b><b class="r" style="left:1188px;top:536px;width:1px;height:22px;background:#e1e1e1"></b><b class="r" style="left:1226px;top:536px;width:1px;height:22px;background:#e1e1e1"></b><b class="r" style="left:1267px;top:536px;width:1px;height:22px;background:#e1e1e1"></b><b class="r" style="left:45px;top:536px;width:1px;height:23px;background:#e1e1e1"></b><b class="r" style="left:117px;top:535px;width:43px;height:24px;background:#f3a26b"></b><b class="r" style="left:775px;top:535px;width:214px;height:24px;background:#cc0000"></b><b class="r" style="left:1188px;top:535px;width:39px;height:24px;background:#f7d3d0"></b><i class="t" style="left:52.51px;top:541px;font-size:13.4px;color:#000;transform:scaleX(0.9476);">30 Jan 26</i><i class="t" style="left:123.13px;top:541px;font-size:13.4px;color:#000;transform:scaleX(0.9975);">2500</i><i class="t" style="left:170.51px;top:541px;font-size:13.4px;color:#000;transform:scaleX(0.9883);">-11.1%</i><i class="t" style="left:226.54px;top:541px;font-size:13.4px;color:#000;">-14.62</i><i class="t" style="left:274.04px;top:541px;font-size:13.4px;color:#000;">-37.90</i><i class="t" style="left:321.00px;top:541px;font-size:13.4px;color:#000;transform:scaleX(0.8670);">BEARISH</i><svg class="ic" style="left:468.00px;top:538.00px" width="18" height="18" viewBox="0 0 18 18"><circle cx="9" cy="9" r="7.4" fill="#fff100" stroke="#8f8a12" stroke-width="1.3"/></svg><i class="t" style="left:490.00px;top:541px;font-size:13.4px;color:#000;transform:scaleX(0.9446);">NORMAL OUT</i><svg class="ic" style="left:619.00px;top:538.00px" width="18" height="18" viewBox="0 0 18 18"><path d="M12.8 5.2 L15.4 2.6" stroke="#23232b" stroke-width="2.2" stroke-linecap="round"/><circle cx="15.9" cy="2.2" r="1.5" fill="#f0f0f4" stroke="#23232b" stroke-width="1.1"/><path d="M.9 4.8 H14 L12.6 12.3 H2.5 Z" fill="#a9a9b6" stroke="#23232b" stroke-width="1.3" stroke-linejoin="round"/><path d="M1.6 7.3 H13.4 M2.2 9.8 H12.9 M4.5 5 L5 12 M7.5 5 V12 M10.6 5 L10.1 12" stroke="#3c3c48" stroke-width=".75"/><path d="M2.5 12.3 L2.1 14 H13 L12.6 12.3" fill="#62626e" stroke="#23232b" stroke-width="1" stroke-linejoin="round"/><circle cx="5" cy="15.5" r="1.6" fill="#f4f4f7" stroke="#23232b" stroke-width="1.1"/><circle cx="10.9" cy="15.5" r="1.6" fill="#f4f4f7" stroke="#23232b" stroke-width="1.1"/></svg><i class="t" style="left:641.00px;top:541px;font-size:13.4px;color:#000;transform:scaleX(0.9221);">PANIC BOTTOM</i><svg class="ic" style="left:780.00px;top:538.00px" width="18" height="18" viewBox="0 0 18 18"><circle cx="9" cy="9" r="7.3" fill="#f03a17" stroke="#8b0a0a" stroke-width="1.3"/><rect x="3.6" y="7.3" width="10.8" height="3.4" rx="0.6" fill="#fff"/></svg><i class="t" style="left:802.00px;top:541px;font-size:13.4px;color:#ffffff;transform:scaleX(0.9291);">AVOID DOWNTREND</i><i class="t" style="left:1014.78px;top:541px;font-size:13.4px;color:#000;transform:scaleX(0.9975);">3</i><i class="t" style="left:1052.54px;top:541px;font-size:13.4px;color:#000;">-27.53</i><i class="t" style="left:1100.04px;top:541px;font-size:13.4px;color:#000;">-71.36</i><i class="t" style="left:1150.75px;top:541px;font-size:13.4px;color:#000;">-0.96</i><i class="t" style="left:1192.25px;top:541px;font-size:13.4px;color:#000;">-0.79</i><i class="t" style="left:1238.65px;top:541px;font-size:13.4px;color:#000;transform:scaleX(0.9453);">48%</i><i class="t" style="left:1271.00px;top:541px;font-size:13.4px;color:#000;transform:scaleX(1.0062);">-</i><b class="r" style="left:112px;top:208px;width:5px;height:345px;background:#d0d4dc"></b></div></div><div class="clip" style="left:0;top:605px;width:1354px;height:69px"><div class="in nb" style="top:-605px;filter:blur(1px)"><b class="r" style="left:0px;top:599px;width:1366px;height:81px;background:#fff"></b><i class="t" style="left:16.40px;top:610px;font-size:10.6px;color:#5f6368;">21</i><b class="r" style="left:0px;top:627px;width:1354px;height:1px;background:#e1e1e1"></b><b class="r" style="left:159px;top:605px;width:1px;height:22px;background:#e1e1e1"></b><b class="r" style="left:222px;top:605px;width:1px;height:22px;background:#e1e1e1"></b><b class="r" style="left:268px;top:605px;width:1px;height:22px;background:#e1e1e1"></b><b class="r" style="left:317px;top:605px;width:1px;height:22px;background:#e1e1e1"></b><b class="r" style="left:463px;top:605px;width:1px;height:22px;background:#e1e1e1"></b><b class="r" style="left:614px;top:605px;width:1px;height:22px;background:#e1e1e1"></b><b class="r" style="left:775px;top:605px;width:1px;height:22px;background:#e1e1e1"></b><b class="r" style="left:988px;top:605px;width:1px;height:22px;background:#e1e1e1"></b><b class="r" style="left:1048px;top:605px;width:1px;height:22px;background:#e1e1e1"></b><b class="r" style="left:1094px;top:605px;width:1px;height:22px;background:#e1e1e1"></b><b class="r" style="left:1143px;top:605px;width:1px;height:22px;background:#e1e1e1"></b><b class="r" style="left:1188px;top:605px;width:1px;height:22px;background:#e1e1e1"></b><b class="r" style="left:1226px;top:605px;width:1px;height:22px;background:#e1e1e1"></b><b class="r" style="left:1267px;top:605px;width:1px;height:22px;background:#e1e1e1"></b><b class="r" style="left:45px;top:605px;width:1px;height:23px;background:#e1e1e1"></b><b class="r" style="left:117px;top:604px;width:43px;height:24px;background:#f8c566"></b><b class="r" style="left:775px;top:604px;width:214px;height:24px;background:#cc0000"></b><b class="r" style="left:1094px;top:604px;width:50px;height:24px;background:#b7e1cd"></b><b class="r" style="left:1188px;top:604px;width:39px;height:24px;background:#ea928a"></b><i class="t" style="left:52.51px;top:610px;font-size:13.4px;color:#000;transform:scaleX(0.9476);">27 Jan 26</i><i class="t" style="left:123.13px;top:610px;font-size:13.4px;color:#000;transform:scaleX(0.9975);">2770</i><i class="t" style="left:174.23px;top:610px;font-size:13.4px;color:#000;transform:scaleX(0.9583);">-7.0%</i><i class="t" style="left:230.25px;top:610px;font-size:13.4px;color:#000;">-4.35</i><i class="t" style="left:280.00px;top:610px;font-size:13.4px;color:#000;transform:scaleX(0.9971);">4.69</i><i class="t" style="left:321.00px;top:610px;font-size:13.4px;color:#000;transform:scaleX(0.8706);">STRONG BEARISH</i><svg class="ic" style="left:468.00px;top:607.00px" width="18" height="18" viewBox="0 0 18 18"><path d="M9 1.6 L16.6 15.6 H1.4 Z" fill="#f3e81c" stroke="#6f6714" stroke-width="1.4" stroke-linejoin="round"/><path d="M9 6.2 V11" stroke="#6f6714" stroke-width="1.7" stroke-linecap="round"/><circle cx="9" cy="13.3" r="1" fill="#6f6714"/></svg><i class="t" style="left:490.00px;top:610px;font-size:13.4px;color:#000;transform:scaleX(0.8779);">DISTRIB (FF TRAP)</i><svg class="ic" style="left:619.00px;top:607.00px" width="18" height="18" viewBox="0 0 18 18"><circle cx="8.8" cy="5.4" r="4.7" fill="url(#rc)"/><circle cx="5.2" cy="11.3" r="4.7" fill="url(#rc)"/><circle cx="12.4" cy="11.5" r="4.7" fill="url(#rc)"/><circle cx="8.8" cy="9.5" r="2.7" fill="#053605"/><path d="M6.2 1 H11.4" stroke="#042804" stroke-width="1.3"/></svg><i class="t" style="left:640.20px;top:610px;font-size:13.4px;color:#000;transform:scaleX(0.8945);">TECHNICAL REBOUND</i><svg class="ic" style="left:780.00px;top:607.00px" width="18" height="18" viewBox="0 0 18 18"><circle cx="9" cy="9" r="7.3" fill="#f03a17" stroke="#8b0a0a" stroke-width="1.3"/><rect x="3.6" y="7.3" width="10.8" height="3.4" rx="0.6" fill="#fff"/></svg><i class="t" style="left:802.00px;top:610px;font-size:13.4px;color:#ffffff;transform:scaleX(0.8700);">TRAP DETECTED (EXIT)</i><i class="t" style="left:1014.78px;top:610px;font-size:13.4px;color:#000;transform:scaleX(0.9975);">5</i><i class="t" style="left:1056.25px;top:610px;font-size:13.4px;color:#000;">-7.39</i><i class="t" style="left:1106.00px;top:610px;font-size:13.4px;color:#000;transform:scaleX(0.9971);">7.97</i><i class="t" style="left:1153.00px;top:610px;font-size:13.4px;color:#000;transform:scaleX(0.9971);">0.31</i><i class="t" style="left:1192.25px;top:610px;font-size:13.4px;color:#000;">-1.36</i><i class="t" style="left:1238.65px;top:610px;font-size:13.4px;color:#000;transform:scaleX(0.9453);">32%</i><i class="t" style="left:1271.00px;top:610px;font-size:13.4px;color:#000;transform:scaleX(1.0062);">-</i><b class="r" style="left:0px;top:627px;width:4px;height:1px;background:#4a4a4a"></b><i class="t" style="left:16.40px;top:633px;font-size:10.6px;color:#5f6368;">22</i><b class="r" style="left:0px;top:650px;width:1354px;height:1px;background:#e1e1e1"></b><b class="r" style="left:159px;top:628px;width:1px;height:22px;background:#e1e1e1"></b><b class="r" style="left:222px;top:628px;width:1px;height:22px;background:#e1e1e1"></b><b class="r" style="left:268px;top:628px;width:1px;height:22px;background:#e1e1e1"></b><b class="r" style="left:317px;top:628px;width:1px;height:22px;background:#e1e1e1"></b><b class="r" style="left:463px;top:628px;width:1px;height:22px;background:#e1e1e1"></b><b class="r" style="left:614px;top:628px;width:1px;height:22px;background:#e1e1e1"></b><b class="r" style="left:775px;top:628px;width:1px;height:22px;background:#e1e1e1"></b><b class="r" style="left:988px;top:628px;width:1px;height:22px;background:#e1e1e1"></b><b class="r" style="left:1048px;top:628px;width:1px;height:22px;background:#e1e1e1"></b><b class="r" style="left:1094px;top:628px;width:1px;height:22px;background:#e1e1e1"></b><b class="r" style="left:1143px;top:628px;width:1px;height:22px;background:#e1e1e1"></b><b class="r" style="left:1188px;top:628px;width:1px;height:22px;background:#e1e1e1"></b><b class="r" style="left:1226px;top:628px;width:1px;height:22px;background:#e1e1e1"></b><b class="r" style="left:1267px;top:628px;width:1px;height:22px;background:#e1e1e1"></b><b class="r" style="left:45px;top:628px;width:1px;height:23px;background:#e1e1e1"></b><b class="r" style="left:117px;top:627px;width:43px;height:24px;background:#f8c666"></b><b class="r" style="left:775px;top:627px;width:214px;height:24px;background:#cc0000"></b><b class="r" style="left:1188px;top:627px;width:39px;height:24px;background:#f8dbd8"></b><i class="t" style="left:52.51px;top:633px;font-size:13.4px;color:#000;transform:scaleX(0.9476);">26 Jan 26</i><i class="t" style="left:123.13px;top:633px;font-size:13.4px;color:#000;transform:scaleX(0.9975);">2780</i><i class="t" style="left:174.23px;top:633px;font-size:13.4px;color:#000;transform:scaleX(0.9583);">-8.0%</i><i class="t" style="left:230.25px;top:633px;font-size:13.4px;color:#000;">-5.08</i><i class="t" style="left:274.04px;top:633px;font-size:13.4px;color:#000;">-25.28</i><i class="t" style="left:321.00px;top:633px;font-size:13.4px;color:#000;transform:scaleX(0.8706);">STRONG BEARISH</i><svg class="ic" style="left:468.00px;top:630.00px" width="18" height="18" viewBox="0 0 18 18"><circle cx="9" cy="9" r="7.4" fill="#fff100" stroke="#8f8a12" stroke-width="1.3"/></svg><i class="t" style="left:490.00px;top:633px;font-size:13.4px;color:#000;transform:scaleX(0.9446);">NORMAL OUT</i><svg class="ic" style="left:619.00px;top:630.00px" width="18" height="18" viewBox="0 0 18 18"><path d="M1.4 3.2 H16.4 L8.9 15.8 Z" fill="#f03a17" stroke="#7a1010" stroke-width="1.4" stroke-linejoin="round"/></svg><i class="t" style="left:641.00px;top:633px;font-size:13.4px;color:#000;transform:scaleX(0.9576);">MARKDOWN</i><svg class="ic" style="left:780.00px;top:630.00px" width="18" height="18" viewBox="0 0 18 18"><circle cx="9" cy="9" r="7.3" fill="#f03a17" stroke="#8b0a0a" stroke-width="1.3"/><rect x="3.6" y="7.3" width="10.8" height="3.4" rx="0.6" fill="#fff"/></svg><i class="t" style="left:802.00px;top:633px;font-size:13.4px;color:#ffffff;transform:scaleX(0.9291);">AVOID DOWNTREND</i><i class="t" style="left:1014.78px;top:633px;font-size:13.4px;color:#000;transform:scaleX(0.9975);">1</i><i class="t" style="left:1056.25px;top:633px;font-size:13.4px;color:#000;">-8.60</i><i class="t" style="left:1100.04px;top:633px;font-size:13.4px;color:#000;">-42.80</i><i class="t" style="left:1153.00px;top:633px;font-size:13.4px;color:#000;transform:scaleX(0.9971);">0.30</i><i class="t" style="left:1192.25px;top:633px;font-size:13.4px;color:#000;">-0.72</i><i class="t" style="left:1238.65px;top:633px;font-size:13.4px;color:#000;transform:scaleX(0.9453);">56%</i><i class="t" style="left:1271.00px;top:633px;font-size:13.4px;color:#000;transform:scaleX(1.0029);">Bearish Maru</i><b class="r" style="left:0px;top:650px;width:4px;height:1px;background:#4a4a4a"></b><i class="t" style="left:16.40px;top:656px;font-size:10.6px;color:#5f6368;">23</i><b class="r" style="left:0px;top:673px;width:1354px;height:1px;background:#e1e1e1"></b><b class="r" style="left:159px;top:651px;width:1px;height:22px;background:#e1e1e1"></b><b class="r" style="left:222px;top:651px;width:1px;height:22px;background:#e1e1e1"></b><b class="r" style="left:268px;top:651px;width:1px;height:22px;background:#e1e1e1"></b><b class="r" style="left:317px;top:651px;width:1px;height:22px;background:#e1e1e1"></b><b class="r" style="left:463px;top:651px;width:1px;height:22px;background:#e1e1e1"></b><b class="r" style="left:614px;top:651px;width:1px;height:22px;background:#e1e1e1"></b><b class="r" style="left:775px;top:651px;width:1px;height:22px;background:#e1e1e1"></b><b class="r" style="left:988px;top:651px;width:1px;height:22px;background:#e1e1e1"></b><b class="r" style="left:1048px;top:651px;width:1px;height:22px;background:#e1e1e1"></b><b class="r" style="left:1094px;top:651px;width:1px;height:22px;background:#e1e1e1"></b><b class="r" style="left:1143px;top:651px;width:1px;height:22px;background:#e1e1e1"></b><b class="r" style="left:1188px;top:651px;width:1px;height:22px;background:#e1e1e1"></b><b class="r" style="left:1226px;top:651px;width:1px;height:22px;background:#e1e1e1"></b><b class="r" style="left:1267px;top:651px;width:1px;height:22px;background:#e1e1e1"></b><b class="r" style="left:45px;top:651px;width:1px;height:23px;background:#e1e1e1"></b><b class="r" style="left:117px;top:650px;width:43px;height:24px;background:#f3d262"></b><b class="r" style="left:775px;top:650px;width:214px;height:24px;background:#cc0000"></b><b class="r" style="left:1048px;top:650px;width:47px;height:24px;background:#f9cb9c"></b><b class="r" style="left:1094px;top:650px;width:50px;height:24px;background:#b7e1cd"></b><b class="r" style="left:1143px;top:650px;width:46px;height:24px;background:#ffe599"></b><b class="r" style="left:1188px;top:650px;width:39px;height:24px;background:#d9efe3"></b><b class="r" style="left:1267px;top:650px;width:88px;height:24px;background:#9900ff"></b><i class="t" style="left:52.51px;top:656px;font-size:13.4px;color:#000;transform:scaleX(0.9476);">23 Jan 26</i><i class="t" style="left:123.13px;top:656px;font-size:13.4px;color:#000;transform:scaleX(0.9975);">2930</i><i class="t" style="left:174.23px;top:656px;font-size:13.4px;color:#000;transform:scaleX(0.9583);">-4.9%</i><i class="t" style="left:232.50px;top:656px;font-size:13.4px;color:#000;transform:scaleX(0.9971);">5.92</i><i class="t" style="left:276.28px;top:656px;font-size:13.4px;color:#000;transform:scaleX(0.9972);">32.72</i><i class="t" style="left:321.00px;top:656px;font-size:13.4px;color:#000;transform:scaleX(0.8835);">DANGER: FF TRAP</i><svg class="ic" style="left:468.00px;top:653.00px" width="18" height="18" viewBox="0 0 18 18"><circle cx="9" cy="9" r="7.4" fill="#16c60c" stroke="#0c3f0a" stroke-width="1.3"/></svg><i class="t" style="left:490.00px;top:656px;font-size:13.4px;color:#000;transform:scaleX(0.8617);">SOLID KICKOFF</i><svg class="ic" style="left:619.00px;top:653.00px" width="18" height="18" viewBox="0 0 18 18"><circle cx="8.8" cy="5.4" r="4.7" fill="url(#rc)"/><circle cx="5.2" cy="11.3" r="4.7" fill="url(#rc)"/><circle cx="12.4" cy="11.5" r="4.7" fill="url(#rc)"/><circle cx="8.8" cy="9.5" r="2.7" fill="#053605"/><path d="M6.2 1 H11.4" stroke="#042804" stroke-width="1.3"/></svg><i class="t" style="left:640.20px;top:656px;font-size:13.4px;color:#000;transform:scaleX(0.8945);">TECHNICAL REBOUND</i><svg class="ic" style="left:780.00px;top:653.00px" width="18" height="18" viewBox="0 0 18 18"><circle cx="9" cy="9" r="7.3" fill="#f03a17" stroke="#8b0a0a" stroke-width="1.3"/><rect x="3.6" y="7.3" width="10.8" height="3.4" rx="0.6" fill="#fff"/></svg><i class="t" style="left:802.00px;top:656px;font-size:13.4px;color:#ffffff;transform:scaleX(0.8700);">TRAP DETECTED (EXIT)</i><i class="t" style="left:1014.78px;top:656px;font-size:13.4px;color:#000;transform:scaleX(0.9975);">1</i><i class="t" style="left:1058.50px;top:656px;font-size:13.4px;color:#000;transform:scaleX(0.9971);">9.51</i><i class="t" style="left:1102.28px;top:656px;font-size:13.4px;color:#000;transform:scaleX(0.9972);">52.56</i><i class="t" style="left:1153.00px;top:656px;font-size:13.4px;color:#000;transform:scaleX(0.9971);">1.26</i><i class="t" style="left:1194.50px;top:656px;font-size:13.4px;color:#000;transform:scaleX(0.9971);">0.51</i><i class="t" style="left:1238.65px;top:656px;font-size:13.4px;color:#000;transform:scaleX(0.9453);">68%</i><i class="t" style="left:1271.00px;top:656px;font-size:13.4px;color:#e9d2ff;transform:scaleX(0.9740);">Hammer (Reve</i><b class="r" style="left:0px;top:673px;width:4px;height:1px;background:#4a4a4a"></b><svg class="ic" style="left:4px;top:663.4px" width="7" height="5" viewBox="0 0 7 5"><path d="M0 4.6 H6.6 L3.3 .2 Z" fill="#1b1b1b"/></svg><b class="r" style="left:112px;top:599px;width:5px;height:81px;background:#d0d4dc"></b></div></div><b class="r" style="left:46px;top:191px;width:66px;height:22px;background:rgba(14,101,235,.10)"></b><b class="r" style="left:117px;top:191px;width:1237px;height:22px;background:rgba(14,101,235,.10)"></b><b class="r" style="left:46px;top:213px;width:1308px;height:1px;background:#3f7be0"></b><b class="r" style="left:46px;top:559px;width:66px;height:45px;background:rgba(14,101,235,.10)"></b><b class="r" style="left:117px;top:559px;width:1237px;height:45px;background:rgba(14,101,235,.10)"></b><b class="r" style="left:46px;top:558px;width:1308px;height:1px;background:#3f7be0"></b><b class="r" style="left:46px;top:604px;width:1308px;height:1px;background:#3f7be0"></b><b class="r" style="left:46px;top:558px;width:67px;height:24px;border:2px solid #1a73e8"></b></div><b class="r" style="left:0;top:674px;width:1354px;height:43px;background:#f9faf8"></b><i class="t" style="left:71.90px;top:693px;font-size:14.4px;color:#0b57d0;transform:scaleX(1.0147);">Add</i><b class="r" style="left:129px;top:685px;width:58px;height:30.6px;border:1px solid #5f6368;border-radius:4px;background:#f9faf8"></b><i class="t" style="left:140.60px;top:694px;font-size:13.6px;color:#1f1f1f;transform:scaleX(1.1436);">1000</i><i class="t" style="left:195.00px;top:696px;font-size:14px;color:#444746;transform:scaleX(1.0334);">more rows at the bottom</i><b class="r" style="left:0;top:717px;width:1366px;height:12px;background:#fff"></b><b class="r" style="left:0;top:716px;width:1366px;height:1px;background:#e1e3e1"></b><b class="r" style="left:0;top:717px;width:112px;height:12px;background:#f9faf8"></b><b class="r" style="left:112px;top:717px;width:5px;height:12px;background:#dcdcdc"></b><b class="r" style="left:119.4px;top:718.2px;width:1159px;height:8.4px;border-radius:4.2px;background:#d3d3d3"></b><svg class="ic" style="left:1328.4px;top:719.6px;" width="5" height="6" viewBox="0 0 5 6"><path d="M4.6 .2 V5.8 L.6 3 Z" fill="#9aa0a6"/></svg><svg class="ic" style="left:1345px;top:719.6px;" width="5" height="6" viewBox="0 0 5 6"><path d="M.4 .2 V5.8 L4.4 3 Z" fill="#9aa0a6"/></svg><b class="r" style="left:1323px;top:717px;width:1px;height:12px;background:#e1e3e1"></b><b class="r" style="left:1339px;top:717px;width:1px;height:12px;background:#e1e3e1"></b><b class="r" style="left:1354px;top:140px;width:12px;height:577px;background:#fdfdfd"></b><b class="r" style="left:1354px;top:674px;width:12px;height:43px;background:#fff"></b><b class="r" style="left:1354px;top:674px;width:1px;height:55px;background:#e1e3e1"></b><b class="r" style="left:1354px;top:684px;width:12px;height:1px;background:#e1e3e1"></b><b class="r" style="left:1354px;top:700px;width:12px;height:1px;background:#e1e3e1"></b><b class="r" style="left:1357px;top:192px;width:7.4px;height:483px;border-radius:3.7px;background:#d9d9d9"></b><svg class="ic" style="left:1357.6px;top:690px;" width="6" height="4" viewBox="0 0 6 4"><path d="M.2 3.8 H5.8 L3 .2 Z" fill="#9aa0a6"/></svg><svg class="ic" style="left:1357.6px;top:706.4px;" width="6" height="4" viewBox="0 0 6 4"><path d="M.2 .2 H5.8 L3 3.8 Z" fill="#9aa0a6"/></svg><b class="r" style="left:0;top:729px;width:1366px;height:36px;background:#f9fbfd"></b><b class="r" style="left:0;top:728.6px;width:1366px;height:1px;background:#e1e3e1"></b><b class="r" style="left:275px;top:729.6px;width:120.4px;height:36px;background:#e1e9f7"></b><b class="r" style="left:57px;top:748.6px;width:10.2px;height:1.6px;background:#444746"></b><b class="r" style="left:61.3px;top:744.3px;width:1.6px;height:10.2px;background:#444746"></b><svg class="ic" style="left:94.8px;top:744px;" width="14.4" height="10" viewBox="0 0 14.4 10"><path d="M0 1 H14.4 M0 5 H14.4 M0 9 H14.4" stroke="#444746" stroke-width="1.6"/></svg><svg class="ic" style="left:150.1px;top:741.2px;" width="12" height="17" viewBox="0 0 12 17"><path d="M3.1 7 V4.4 A2.9 2.9 0 0 1 8.9 4.4 V7" fill="none" stroke="#444746" stroke-width="1.8"/><rect x=".3" y="6.4" width="11.4" height="10.2" rx="1.6" fill="#444746"/><circle cx="6" cy="11.4" r="1.3" fill="#f9fbfd"/></svg><i class="t" style="left:168.00px;top:742px;font-size:14.8px;color:#444746;transform:scaleX(1.0358);-webkit-text-stroke:.3px #444746;">Dashboard</i><svg class="ic" style="left:254.8px;top:747.1px;" width="8" height="4.2" viewBox="0 0 8 4.2"><path d="M0 0 H8 L4.0 4.2 Z" fill="#444746"/></svg><svg class="ic" style="left:289.8px;top:741.2px;" width="12" height="17" viewBox="0 0 12 17"><path d="M3.1 7 V4.4 A2.9 2.9 0 0 1 8.9 4.4 V7" fill="none" stroke="#0b57d0" stroke-width="1.8"/><rect x=".3" y="6.4" width="11.4" height="10.2" rx="1.6" fill="#0b57d0"/><circle cx="6" cy="11.4" r="1.3" fill="#f9fbfd"/></svg><i class="t" style="left:307.80px;top:742px;font-size:14.8px;color:#0b57d0;font-weight:700;transform:scaleX(0.9896);">Process</i><svg class="ic" style="left:376.0px;top:747.1px;" width="8" height="4.2" viewBox="0 0 8 4.2"><path d="M0 0 H8 L4.0 4.2 Z" fill="#0b57d0"/></svg><i class="t" style="left:407.80px;top:742px;font-size:14.8px;color:#444746;transform:scaleX(1.0712);-webkit-text-stroke:.3px #444746;">Journal</i><svg class="ic" style="left:470.4px;top:747.1px;" width="8" height="4.2" viewBox="0 0 8 4.2"><path d="M0 0 H8 L4.0 4.2 Z" fill="#444746"/></svg><svg class="ic" style="left:507px;top:741.2px;" width="12" height="17" viewBox="0 0 12 17"><path d="M3.1 7 V4.4 A2.9 2.9 0 0 1 8.9 4.4 V7" fill="none" stroke="#444746" stroke-width="1.8"/><rect x=".3" y="6.4" width="11.4" height="10.2" rx="1.6" fill="#444746"/><circle cx="6" cy="11.4" r="1.3" fill="#f9fbfd"/></svg><i class="t" style="left:525.00px;top:742px;font-size:14.8px;color:#444746;transform:scaleX(1.0157);-webkit-text-stroke:.3px #444746;">Daily_Flow_Report</i><svg class="ic" style="left:662.8px;top:747.1px;" width="8" height="4.2" viewBox="0 0 8 4.2"><path d="M0 0 H8 L4.0 4.2 Z" fill="#444746"/></svg><b class="r" style="left:1196.3px;top:733px;width:102.2px;height:29.4px;border-radius:8px;background:#c4eed0"></b><i class="t" style="left:1205.40px;top:741px;font-size:14.2px;color:#0d5a2d;transform:scaleX(1.0393);">Count: 48</i><svg class="ic" style="left:1278.0px;top:745.9px;" width="8" height="4.2" viewBox="0 0 8 4.2"><path d="M0 0 H8 L4.0 4.2 Z" fill="#0d3a1d"/></svg><svg class="ic" style="left:1334px;top:744.4px;" width="8" height="11" viewBox="0 0 8 11"><path d="M6.4 .8 L1.6 5.4 L6.4 10" fill="none" stroke="#444746" stroke-width="1.8"/></svg><b class="r" style="left:0px;top:673px;width:1354px;height:1px;background:#cfcfcf"></b><svg class="ic" style="left:1349px;top:596px" width="15" height="22" viewBox="1349 596 15 22"><path d="M1350.4 597.1 V613.8 L1354.2 610.4 L1356.8 616.5 L1359.3 615.4 L1356.7 609.4 L1361.9 608.9 Z" fill="#fff" stroke="#000" stroke-width="1.15" stroke-linejoin="round"/></svg></body></html>
